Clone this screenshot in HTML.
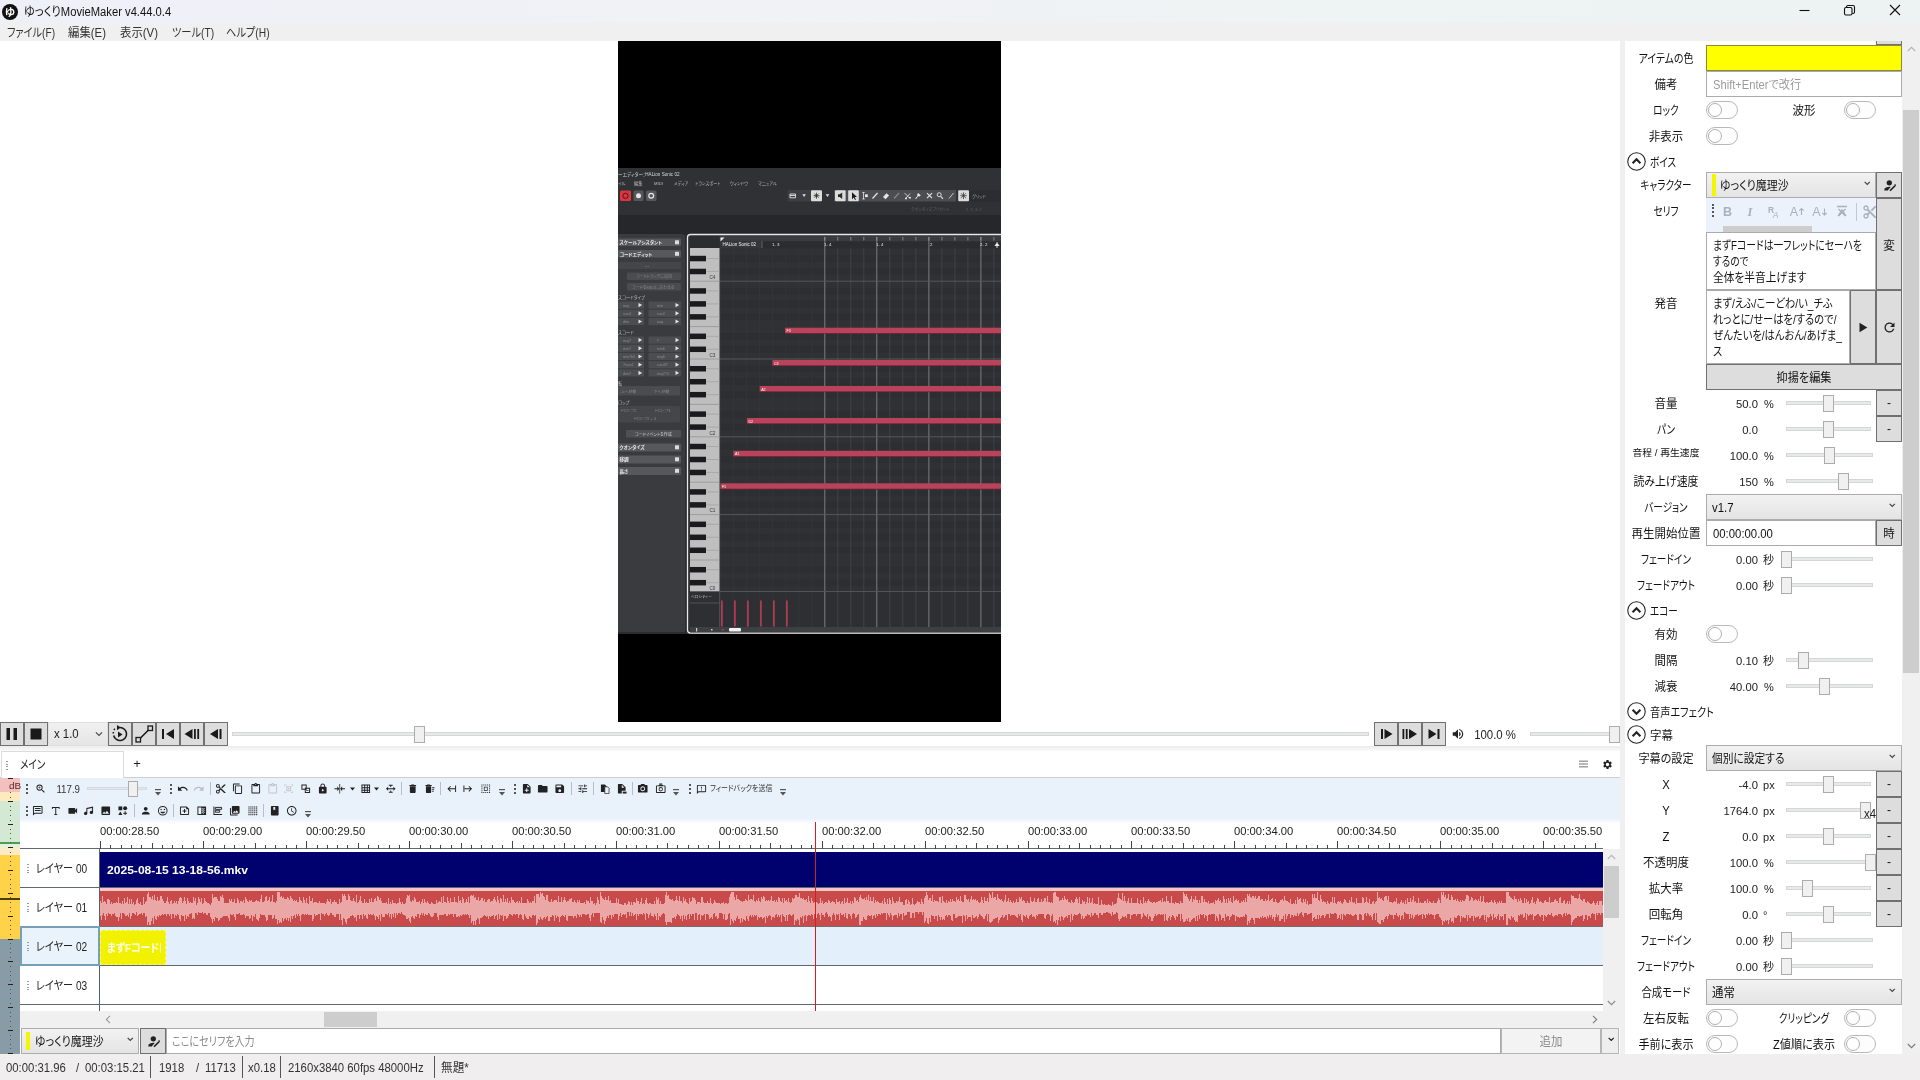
<!DOCTYPE html>
<html lang="ja"><head><meta charset="utf-8"><title>ゆっくりMovieMaker v4.44.0.4</title>
<style>
html,body{margin:0;padding:0}
body{width:1920px;height:1080px;overflow:hidden;position:relative;background:#fff;
font-family:"Liberation Sans","Noto Sans CJK JP",sans-serif;font-size:12px;color:#000;font-feature-settings:"palt"}
div,span.t,svg.i,svg.a{position:absolute;box-sizing:border-box}
span.t{white-space:nowrap;display:block}
.btn{background:#ddd;border:1px solid #707070}
.cmb{background:linear-gradient(#f2f2f2,#e4e4e4);border:1px solid #acacac}
.tb{background:#fff;border:1px solid #ababab}
.trk{background:#e7eaea;border:1px solid #d6d6d6;height:4px}
.thm{background:#f0f0f0;border:1px solid #acacac}
.tg{border:1px solid #b8b8b8;border-radius:9px;background:#fdfdfd}
.tg i{position:absolute;left:1px;top:1px;width:14px;height:14px;border-radius:50%;border:1px solid #b0b0b0;background:#fff;box-sizing:border-box}
</style></head><body><div id="root" style="left:0;top:0;width:1920px;height:1080px;will-change:transform">

<div style="left:0px;top:0px;width:1920px;height:23px;background:linear-gradient(90deg,#eef0f8 0%,#f1f2f6 35%,#eef3f3 70%,#edf2f3 100%);"></div>
<div style="left:0px;top:23px;width:1920px;height:18px;background:#f0f0f0;"></div>
<div style="left:2px;top:3.500px;width:16px;height:16px;border-radius:50%;background:#111"></div>
<span class="t" style="top:3.5px;font-size:10.5px;line-height:16px;color:#fff;font-weight:bold;left:-140px;width:300px;text-align:center;transform-origin:50% 50%;transform:scaleX(1.000);">ゆ</span>
<span class="t" style="top:3.5px;font-size:12px;line-height:16px;color:#111;left:24px;transform-origin:0 50%;transform:scaleX(0.935);">ゆっくりMovieMaker v4.44.0.4</span>
<span class="t" style="top:24.5px;font-size:12px;line-height:16px;color:#333;left:7px;transform-origin:0 50%;transform:scaleX(0.844);">ファイル(F)</span>
<span class="t" style="top:24.5px;font-size:12px;line-height:16px;color:#333;left:68px;transform-origin:0 50%;transform:scaleX(0.948);">編集(E)</span>
<span class="t" style="top:24.5px;font-size:12px;line-height:16px;color:#333;left:120px;transform-origin:0 50%;transform:scaleX(0.948);">表示(V)</span>
<span class="t" style="top:24.5px;font-size:12px;line-height:16px;color:#333;left:172px;transform-origin:0 50%;transform:scaleX(0.853);">ツール(T)</span>
<span class="t" style="top:24.5px;font-size:12px;line-height:16px;color:#333;left:226px;transform-origin:0 50%;transform:scaleX(0.853);">ヘルプ(H)</span>
<svg class="a" style="left:1790px;top:0" width="130" height="23" viewBox="0 0 130 23" fill="none" stroke="#111" stroke-width="1.1"><path d="M9.500 10.500h10"/><rect x="54.500" y="7.500" width="7.500" height="7.500" rx="1.500"/><path d="M56.500 7.500v-.5a1.500 1.500 0 0 1 1.500-1.500h5a1.500 1.500 0 0 1 1.500 1.500v5a1.500 1.500 0 0 1-1.500 1.500h-.7"/><path d="M100 5l10 10M110 5l-10 10"/></svg>
<svg class="a" style="left:618px;top:41px" width="383" height="681" viewBox="618 41 383 681" font-family="Liberation Sans,Noto Sans CJK JP,sans-serif"><rect x="618" y="41" width="383" height="681" fill="#000"/><rect x="618" y="168" width="383" height="466" fill="#2a2c30"/><rect x="618" y="168" width="383" height="47" fill="#2f3135"/><rect x="618" y="215" width="383" height="19" fill="#25272a"/><text x="618" y="176" font-size="4.600" fill="#d8d8d8">ーエディター：HALion Sonic 02</text><text x="618" y="184.500" font-size="4.200" fill="#bdbdbd">イル</text><text x="634" y="184.500" font-size="4.200" fill="#bdbdbd">編集</text><text x="654" y="184.500" font-size="4.200" fill="#bdbdbd">MIDI</text><text x="674" y="184.500" font-size="4.200" fill="#bdbdbd">メディア</text><text x="695" y="184.500" font-size="4.200" fill="#bdbdbd">トランスポート</text><text x="730" y="184.500" font-size="4.200" fill="#bdbdbd">ウィンドウ</text><text x="758" y="184.500" font-size="4.200" fill="#bdbdbd">マニュアル</text><rect x="620" y="190.500" width="11" height="10.500" rx="1.500" fill="#d8373f"/><circle cx="625.500" cy="195.800" r="2.600" fill="none" stroke="#5a1015" stroke-width="1"/><rect x="633.500" y="190.500" width="10" height="10.500" rx="1.500" fill="#55575b"/><circle cx="638.500" cy="195.800" r="2.500" fill="#e6e6e6"/><rect x="646" y="190.500" width="10.500" height="10.500" rx="1.500" fill="#55575b"/><circle cx="651.200" cy="195.800" r="2.400" fill="none" stroke="#e6e6e6" stroke-width="1.200"/><rect x="787.500" y="190" width="34.500" height="11.500" rx="1" fill="#3c3e42"/><rect x="834" y="190" width="122" height="11.500" fill="#4b4d51"/><rect x="811" y="190.200" width="11" height="11" rx="1" fill="#dcdcdc"/><rect x="835" y="190.200" width="10.6" height="11" rx="1" fill="#dcdcdc"/><rect x="848.2" y="190.200" width="10.6" height="11" rx="1" fill="#dcdcdc"/><rect x="958.2" y="190.200" width="10.8" height="11" rx="1" fill="#dcdcdc"/><path d="M802.300 194.300h3.600l-1.800 2.800zM825.700 194.300h3.600l-1.800 2.800z" fill="#e0e0e0"/><path d="M790 194h5.500v3.800H790zM790 195.500h5.500" fill="none" stroke="#e4e4e4" stroke-width=".9"/><path d="M813.500 195.700h6M816.500 192.700v6M814.500 193.700l4 4M818.500 193.700l-4 4" stroke="#2a2a2a" stroke-width=".8"/><path d="M838 194.300h1.800l2.400-1.800v6.400l-2.400-1.800H838z" fill="#2a2a2a"/><path d="M852 192.300v7l1.800-1.700 1.200 2.300.9-.5-1.200-2.300h2.300z" fill="#1a1a1a"/><path d="M862.300 192.500h2.400M863.500 192.500v6.500M862.300 199h2.400" stroke="#e6e6e6" stroke-width=".8" fill="none"/><rect x="865" y="194.300" width="2.800" height="2.800" fill="#e6e6e6"/><path d="M872.500 198.500l5-5.500" stroke="#e6e6e6" stroke-width="1.200"/><path d="M883 197l3.500-3.800 2.600 2.300-3.500 3.800z" fill="#e6e6e6"/><path d="M894 198.500l5-5.500" stroke="#85878b" stroke-width="1.200"/><path d="M904.500 193l5 5M910 193.500l-4 4.500" stroke="#e6e6e6" stroke-width=".8"/><circle cx="906" cy="198.500" r="1" fill="#e6e6e6"/><circle cx="910" cy="197.800" r="1" fill="#e6e6e6"/><path d="M915.500 199l3-4" stroke="#e6e6e6" stroke-width="1"/><path d="M918 193l2.800 2.300-1.800 1.400-2-1.800z" fill="#e6e6e6"/><path d="M927 193.200l5 5M932 193.200l-5 5" stroke="#e6e6e6" stroke-width="1.100"/><circle cx="939.200" cy="194.700" r="2" fill="none" stroke="#e6e6e6" stroke-width=".9"/><path d="M940.600 196.300l2.400 2.600" stroke="#e6e6e6" stroke-width="1.100"/><path d="M949 198.500l4.500-5.500" stroke="#e6e6e6" stroke-width=".8"/><path d="M961 193.200l5 5M966 193.200l-5 5M963.500 192.300v6.800M960.200 195.700h6.600" stroke="#2a2a2a" stroke-width=".7"/><rect x="970" y="190.500" width="31" height="11" fill="#2b2d30"/><text x="972" y="198" font-size="4.200" fill="#9a9a9a">グリッド</text><text x="911" y="210.500" font-size="4" fill="#5c5e62">クオンタイズプリセット</text><text x="966" y="210.500" font-size="4" fill="#5c5e62">2. 3. 3.   0</text><path d="M618 234h63a4 4 0 0 1 4 4v394h-67z" fill="#393b3f"/><path d="M618 634v-2h67v2z" fill="#2a2c30"/><rect x="618" y="238.5" width="63" height="7.5" rx="1" fill="#56585c"/><text x="619.500" y="244.1" font-size="4.600" fill="#e8e8e8" font-weight="bold">スケールアシスタント</text><rect x="675" y="240.3" width="4" height="4" fill="#dcdcdc"/><rect x="618" y="250" width="63" height="7.5" rx="1" fill="#56585c"/><text x="619.500" y="255.6" font-size="4.600" fill="#e8e8e8" font-weight="bold">コードエディット</text><rect x="675" y="251.8" width="4" height="4" fill="#dcdcdc"/><rect x="618" y="262" width="63" height="7" fill="#44464a"/><text x="645" y="267" font-size="4" fill="#888">---</text><rect x="627" y="272.500" width="54" height="7.500" rx="1" fill="#4a4c50"/><text x="636" y="278" font-size="4" fill="#85878b">コードトラックに追加</text><rect x="627" y="283" width="54" height="7.500" rx="1" fill="#4a4c50"/><text x="632" y="288.500" font-size="4" fill="#85878b">コードをMIDIに合わせる</text><text x="618" y="299" font-size="4.300" fill="#b8b8b8">スコードタイプ</text><rect x="618" y="301.5" width="26" height="7.200" fill="#4b4d51"/><text x="623.0" y="306.8" font-size="3.800" fill="#8a8c90">maj</text><path d="M638.5 303.0v4.200l3.600-2.100z" fill="#e4e4e4"/><rect x="648.5" y="301.5" width="32.5" height="7.200" fill="#4b4d51"/><text x="656.75" y="306.8" font-size="3.800" fill="#8a8c90">min</text><path d="M675.5 303.0v4.200l3.600-2.100z" fill="#e4e4e4"/><rect x="618" y="309.7" width="26" height="7.200" fill="#4b4d51"/><text x="623.0" y="315.0" font-size="3.800" fill="#8a8c90">sus4</text><path d="M638.5 311.2v4.200l3.600-2.100z" fill="#e4e4e4"/><rect x="648.5" y="309.7" width="32.5" height="7.200" fill="#4b4d51"/><text x="656.75" y="315.0" font-size="3.800" fill="#8a8c90">sus2</text><path d="M675.5 311.2v4.200l3.600-2.100z" fill="#e4e4e4"/><rect x="618" y="317.9" width="26" height="7.200" fill="#4b4d51"/><text x="623.0" y="323.2" font-size="3.800" fill="#8a8c90">dim</text><path d="M638.5 319.4v4.200l3.600-2.100z" fill="#e4e4e4"/><rect x="648.5" y="317.9" width="32.5" height="7.200" fill="#4b4d51"/><text x="656.75" y="323.2" font-size="3.800" fill="#8a8c90">aug</text><path d="M675.5 319.4v4.200l3.600-2.100z" fill="#e4e4e4"/><text x="618" y="334" font-size="4.300" fill="#b8b8b8">スコード</text><rect x="618" y="336.5" width="26" height="7.200" fill="#4b4d51"/><text x="623.0" y="341.8" font-size="3.800" fill="#8a8c90">maj7</text><path d="M638.5 338.0v4.200l3.600-2.100z" fill="#e4e4e4"/><rect x="648.5" y="336.5" width="32.5" height="7.200" fill="#4b4d51"/><text x="656.75" y="341.8" font-size="3.800" fill="#8a8c90">7</text><path d="M675.5 338.0v4.200l3.600-2.100z" fill="#e4e4e4"/><rect x="618" y="344.7" width="26" height="7.200" fill="#4b4d51"/><text x="623.0" y="350.0" font-size="3.800" fill="#8a8c90">min7</text><path d="M638.5 346.2v4.200l3.600-2.100z" fill="#e4e4e4"/><rect x="648.5" y="344.7" width="32.5" height="7.200" fill="#4b4d51"/><text x="656.75" y="350.0" font-size="3.800" fill="#8a8c90">min6</text><path d="M675.5 346.2v4.200l3.600-2.100z" fill="#e4e4e4"/><rect x="618" y="352.9" width="26" height="7.200" fill="#4b4d51"/><text x="623.0" y="358.2" font-size="3.800" fill="#8a8c90">min7b5</text><path d="M638.5 354.4v4.200l3.600-2.100z" fill="#e4e4e4"/><rect x="648.5" y="352.9" width="32.5" height="7.200" fill="#4b4d51"/><text x="656.75" y="358.2" font-size="3.800" fill="#8a8c90">maj6</text><path d="M675.5 354.4v4.200l3.600-2.100z" fill="#e4e4e4"/><rect x="618" y="361.1" width="26" height="7.200" fill="#4b4d51"/><text x="623.0" y="366.40000000000003" font-size="3.800" fill="#8a8c90">7sus4</text><path d="M638.5 362.6v4.200l3.600-2.100z" fill="#e4e4e4"/><rect x="648.5" y="361.1" width="32.5" height="7.200" fill="#4b4d51"/><text x="656.75" y="366.40000000000003" font-size="3.800" fill="#8a8c90">sus4/7</text><path d="M675.5 362.6v4.200l3.600-2.100z" fill="#e4e4e4"/><rect x="618" y="369.3" width="26" height="7.200" fill="#4b4d51"/><text x="623.0" y="374.6" font-size="3.800" fill="#8a8c90">dim7</text><path d="M638.5 370.8v4.200l3.600-2.100z" fill="#e4e4e4"/><rect x="648.5" y="369.3" width="32.5" height="7.200" fill="#4b4d51"/><text x="656.75" y="374.6" font-size="3.800" fill="#8a8c90">maj7#5</text><path d="M675.5 370.8v4.200l3.600-2.100z" fill="#e4e4e4"/><text x="618" y="384.500" font-size="4.300" fill="#b8b8b8">転</text><rect x="618" y="386" width="62" height="9.500" rx="1" fill="#4a4c50"/><text x="621" y="392.500" font-size="3.800" fill="#888">上へ移動</text><text x="654" y="392.500" font-size="3.800" fill="#888">下へ移動</text><text x="618" y="403.500" font-size="4.300" fill="#b8b8b8">ロップ</text><rect x="618" y="406" width="62" height="16.500" rx="1.500" fill="#44464a"/><text x="621" y="412" font-size="3.800" fill="#888">ドロップ2</text><text x="655" y="412" font-size="3.800" fill="#888">ドロップ3</text><text x="634" y="420" font-size="3.800" fill="#888">ドロップ2 + 4</text><rect x="626" y="430" width="55" height="7.500" rx="1" fill="#4e5054"/><text x="635" y="435.500" font-size="4" fill="#d0d0d0">コードイベントを作成</text><rect x="618" y="443.5" width="63" height="8" rx="1" fill="#56585c"/><text x="619.500" y="449.1" font-size="4.600" fill="#e8e8e8" font-weight="bold">クオンタイズ</text><rect x="675" y="445.3" width="4" height="4" fill="#dcdcdc"/><rect x="618" y="455.5" width="63" height="8" rx="1" fill="#56585c"/><text x="619.500" y="461.1" font-size="4.600" fill="#e8e8e8" font-weight="bold">移調</text><rect x="675" y="457.3" width="4" height="4" fill="#dcdcdc"/><rect x="618" y="467" width="63" height="8" rx="1" fill="#56585c"/><text x="619.500" y="472.6" font-size="4.600" fill="#e8e8e8" font-weight="bold">長さ</text><rect x="675" y="468.8" width="4" height="4" fill="#dcdcdc"/><rect x="687.500" y="234.500" width="320" height="398.500" rx="3" fill="#2f3135" stroke="#e8e8e8" stroke-width="1.300"/><rect x="690" y="236" width="311" height="5.500" fill="#393b3f"/><rect x="720" y="241.500" width="281" height="7" fill="#2a2c30"/><rect x="720" y="241.500" width="41.500" height="7" fill="#34363a"/><rect x="720" y="248.500" width="281" height="343" fill="#2f3135"/><rect x="720" y="579.43" width="281" height="6.483" fill="#2c2e32"/><rect x="720" y="566.47" width="281" height="6.483" fill="#2c2e32"/><rect x="720" y="547.02" width="281" height="6.483" fill="#2c2e32"/><rect x="720" y="534.05" width="281" height="6.483" fill="#2c2e32"/><rect x="720" y="521.09" width="281" height="6.483" fill="#2c2e32"/><rect x="720" y="501.64" width="281" height="6.483" fill="#2c2e32"/><rect x="720" y="488.67" width="281" height="6.483" fill="#2c2e32"/><rect x="720" y="469.22" width="281" height="6.483" fill="#2c2e32"/><rect x="720" y="456.26" width="281" height="6.483" fill="#2c2e32"/><rect x="720" y="443.29" width="281" height="6.483" fill="#2c2e32"/><rect x="720" y="423.84" width="281" height="6.483" fill="#2c2e32"/><rect x="720" y="410.88" width="281" height="6.483" fill="#2c2e32"/><rect x="720" y="391.43" width="281" height="6.483" fill="#2c2e32"/><rect x="720" y="378.46" width="281" height="6.483" fill="#2c2e32"/><rect x="720" y="365.50" width="281" height="6.483" fill="#2c2e32"/><rect x="720" y="346.05" width="281" height="6.483" fill="#2c2e32"/><rect x="720" y="333.08" width="281" height="6.483" fill="#2c2e32"/><rect x="720" y="313.63" width="281" height="6.483" fill="#2c2e32"/><rect x="720" y="300.67" width="281" height="6.483" fill="#2c2e32"/><rect x="720" y="287.70" width="281" height="6.483" fill="#2c2e32"/><rect x="720" y="268.25" width="281" height="6.483" fill="#2c2e32"/><rect x="720" y="255.28" width="281" height="6.483" fill="#2c2e32"/><path d="M720.7 248.500V627" stroke="#36383c" stroke-width=".7"/><path d="M733.7 248.500V627" stroke="#36383c" stroke-width=".7"/><path d="M746.7 248.500V627" stroke="#36383c" stroke-width=".7"/><path d="M759.7 248.500V627" stroke="#36383c" stroke-width=".7"/><path d="M772.7 248.500V627" stroke="#36383c" stroke-width=".7"/><path d="M785.8 248.500V627" stroke="#36383c" stroke-width=".7"/><path d="M798.8 248.500V627" stroke="#36383c" stroke-width=".7"/><path d="M811.8 248.500V627" stroke="#36383c" stroke-width=".7"/><path d="M824.8 237V627" stroke="#85878b" stroke-width=".9"/><path d="M837.8 248.500V627" stroke="#484a4e" stroke-width=".7"/><path d="M850.8 248.500V627" stroke="#484a4e" stroke-width=".7"/><path d="M863.8 248.500V627" stroke="#484a4e" stroke-width=".7"/><path d="M876.8 237V627" stroke="#85878b" stroke-width=".9"/><path d="M889.8 248.500V627" stroke="#484a4e" stroke-width=".7"/><path d="M902.8 248.500V627" stroke="#484a4e" stroke-width=".7"/><path d="M915.9 248.500V627" stroke="#484a4e" stroke-width=".7"/><path d="M928.9 237V627" stroke="#85878b" stroke-width=".9"/><path d="M941.9 248.500V627" stroke="#484a4e" stroke-width=".7"/><path d="M954.9 248.500V627" stroke="#484a4e" stroke-width=".7"/><path d="M967.9 248.500V627" stroke="#484a4e" stroke-width=".7"/><path d="M980.9 237V627" stroke="#85878b" stroke-width=".9"/><path d="M993.9 248.500V627" stroke="#484a4e" stroke-width=".7"/><path d="M824.8 237v3.500" stroke="#a8a8a8" stroke-width=".7"/><path d="M837.8 237v3.500" stroke="#a8a8a8" stroke-width=".7"/><path d="M850.8 237v3.500" stroke="#a8a8a8" stroke-width=".7"/><path d="M863.8 237v3.500" stroke="#a8a8a8" stroke-width=".7"/><path d="M876.8 237v3.500" stroke="#a8a8a8" stroke-width=".7"/><path d="M889.8 237v3.500" stroke="#a8a8a8" stroke-width=".7"/><path d="M902.8 237v3.500" stroke="#a8a8a8" stroke-width=".7"/><path d="M915.9 237v3.500" stroke="#a8a8a8" stroke-width=".7"/><path d="M928.9 237v3.500" stroke="#a8a8a8" stroke-width=".7"/><path d="M941.9 237v3.500" stroke="#a8a8a8" stroke-width=".7"/><path d="M954.9 237v3.500" stroke="#a8a8a8" stroke-width=".7"/><path d="M967.9 237v3.500" stroke="#a8a8a8" stroke-width=".7"/><path d="M980.9 237v3.500" stroke="#a8a8a8" stroke-width=".7"/><path d="M993.9 237v3.500" stroke="#a8a8a8" stroke-width=".7"/><path d="M720.500 237.500h4l-4 4z" fill="#f0f0f0"/><text x="722.500" y="246" font-size="4.500" fill="#f4f4f4">HALion Sonic 02</text><path d="M762 241v7" stroke="#888" stroke-width=".6"/><text x="772" y="246" font-size="4.400" fill="#e6e6e6">1. 3</text><text x="824" y="246" font-size="4.400" fill="#e6e6e6">1. 4</text><text x="876" y="246" font-size="4.400" fill="#e6e6e6">1. 4</text><text x="930" y="246" font-size="4.400" fill="#e6e6e6">2</text><text x="980" y="246" font-size="4.400" fill="#e6e6e6">2. 2</text><path d="M995 245.500l2-2 2 2zM997 242v6" stroke="#fff" fill="#fff" stroke-width=".8"/><path d="M720 514.6H1001" stroke="#5a5c60" stroke-width=".9"/><path d="M720 436.8H1001" stroke="#5a5c60" stroke-width=".9"/><path d="M720 359.0H1001" stroke="#5a5c60" stroke-width=".9"/><path d="M720 281.2H1001" stroke="#5a5c60" stroke-width=".9"/><rect x="690" y="248" width="29.500" height="344.400" fill="#bfbfbf"/><rect x="690" y="236" width="29.500" height="12" fill="#2a2c30"/><path d="M690 592.40h29.500" stroke="#8f8f8f" stroke-width=".7"/><rect x="690" y="579.93" width="16" height="5.5" fill="#1b1b1d"/><path d="M706 582.68h13.500" stroke="#9a9a9a" stroke-width=".6"/><rect x="690" y="566.97" width="16" height="5.5" fill="#1b1b1d"/><path d="M706 569.71h13.500" stroke="#9a9a9a" stroke-width=".6"/><path d="M690 559.99h29.500" stroke="#8f8f8f" stroke-width=".7"/><rect x="690" y="547.52" width="16" height="5.5" fill="#1b1b1d"/><path d="M706 550.26h13.500" stroke="#9a9a9a" stroke-width=".6"/><rect x="690" y="534.55" width="16" height="5.5" fill="#1b1b1d"/><path d="M706 537.29h13.500" stroke="#9a9a9a" stroke-width=".6"/><rect x="690" y="521.59" width="16" height="5.5" fill="#1b1b1d"/><path d="M706 524.33h13.500" stroke="#9a9a9a" stroke-width=".6"/><path d="M690 514.60h29.500" stroke="#8f8f8f" stroke-width=".7"/><rect x="690" y="502.14" width="16" height="5.5" fill="#1b1b1d"/><path d="M706 504.88h13.500" stroke="#9a9a9a" stroke-width=".6"/><rect x="690" y="489.17" width="16" height="5.5" fill="#1b1b1d"/><path d="M706 491.91h13.500" stroke="#9a9a9a" stroke-width=".6"/><path d="M690 482.19h29.500" stroke="#8f8f8f" stroke-width=".7"/><rect x="690" y="469.72" width="16" height="5.5" fill="#1b1b1d"/><path d="M706 472.46h13.500" stroke="#9a9a9a" stroke-width=".6"/><rect x="690" y="456.76" width="16" height="5.5" fill="#1b1b1d"/><path d="M706 459.50h13.500" stroke="#9a9a9a" stroke-width=".6"/><rect x="690" y="443.79" width="16" height="5.5" fill="#1b1b1d"/><path d="M706 446.53h13.500" stroke="#9a9a9a" stroke-width=".6"/><path d="M690 436.81h29.500" stroke="#8f8f8f" stroke-width=".7"/><rect x="690" y="424.34" width="16" height="5.5" fill="#1b1b1d"/><path d="M706 427.08h13.500" stroke="#9a9a9a" stroke-width=".6"/><rect x="690" y="411.38" width="16" height="5.5" fill="#1b1b1d"/><path d="M706 414.12h13.500" stroke="#9a9a9a" stroke-width=".6"/><path d="M690 404.39h29.500" stroke="#8f8f8f" stroke-width=".7"/><rect x="690" y="391.93" width="16" height="5.5" fill="#1b1b1d"/><path d="M706 394.67h13.500" stroke="#9a9a9a" stroke-width=".6"/><rect x="690" y="378.96" width="16" height="5.5" fill="#1b1b1d"/><path d="M706 381.70h13.500" stroke="#9a9a9a" stroke-width=".6"/><rect x="690" y="365.99" width="16" height="5.5" fill="#1b1b1d"/><path d="M706 368.74h13.500" stroke="#9a9a9a" stroke-width=".6"/><path d="M690 359.01h29.500" stroke="#8f8f8f" stroke-width=".7"/><rect x="690" y="346.55" width="16" height="5.5" fill="#1b1b1d"/><path d="M706 349.29h13.500" stroke="#9a9a9a" stroke-width=".6"/><rect x="690" y="333.58" width="16" height="5.5" fill="#1b1b1d"/><path d="M706 336.32h13.500" stroke="#9a9a9a" stroke-width=".6"/><path d="M690 326.60h29.500" stroke="#8f8f8f" stroke-width=".7"/><rect x="690" y="314.13" width="16" height="5.5" fill="#1b1b1d"/><path d="M706 316.87h13.500" stroke="#9a9a9a" stroke-width=".6"/><rect x="690" y="301.16" width="16" height="5.5" fill="#1b1b1d"/><path d="M706 303.91h13.500" stroke="#9a9a9a" stroke-width=".6"/><rect x="690" y="288.20" width="16" height="5.5" fill="#1b1b1d"/><path d="M706 290.94h13.500" stroke="#9a9a9a" stroke-width=".6"/><path d="M690 281.22h29.500" stroke="#8f8f8f" stroke-width=".7"/><rect x="690" y="268.75" width="16" height="5.5" fill="#1b1b1d"/><path d="M706 271.49h13.500" stroke="#9a9a9a" stroke-width=".6"/><rect x="690" y="255.78" width="16" height="5.5" fill="#1b1b1d"/><path d="M706 258.53h13.500" stroke="#9a9a9a" stroke-width=".6"/><text x="709.500" y="590.1" font-size="4.600" fill="#3a3a3a">C0</text><text x="709.500" y="512.3" font-size="4.600" fill="#3a3a3a">C1</text><text x="709.500" y="434.5" font-size="4.600" fill="#3a3a3a">C2</text><text x="709.500" y="356.7" font-size="4.600" fill="#3a3a3a">C3</text><text x="709.500" y="278.9" font-size="4.600" fill="#3a3a3a">C4</text><rect x="785" y="327.7" width="216.0" height="5.800" fill="#b8435a"/><path d="M785 333.5H1001" stroke="#6a2030" stroke-width=".7"/><text x="786.5" y="332.3" font-size="3.600" fill="#fff">F3</text><rect x="772.5" y="360" width="228.5" height="5.800" fill="#b8435a"/><path d="M772.5 365.8H1001" stroke="#6a2030" stroke-width=".7"/><text x="774.0" y="364.6" font-size="3.600" fill="#fff">C3</text><rect x="759.7" y="386" width="241.3" height="5.800" fill="#b8435a"/><path d="M759.7 391.8H1001" stroke="#6a2030" stroke-width=".7"/><text x="761.2" y="390.6" font-size="3.600" fill="#fff">A2</text><rect x="747" y="418" width="254.0" height="5.800" fill="#b8435a"/><path d="M747 423.8H1001" stroke="#6a2030" stroke-width=".7"/><text x="748.5" y="422.6" font-size="3.600" fill="#fff">D2</text><rect x="733.4" y="450.8" width="267.6" height="5.800" fill="#b8435a"/><path d="M733.4 456.6H1001" stroke="#6a2030" stroke-width=".7"/><text x="734.9" y="455.40000000000003" font-size="3.600" fill="#fff">A1</text><rect x="720.4" y="483.3" width="280.6" height="5.800" fill="#b8435a"/><path d="M720.4 489.1H1001" stroke="#6a2030" stroke-width=".7"/><text x="721.9" y="487.90000000000003" font-size="3.600" fill="#fff">F1</text><rect x="690" y="591.500" width="311" height="35.500" fill="#2d2f33"/><path d="M690 591.500H1001M690 603h29.500M719.700 591.500V627" stroke="#5a5c60" stroke-width=".8"/><text x="691" y="597.500" font-size="3.800" fill="#c8c8c8">ベロシティー</text><path d="M720.7 592V627" stroke="#36383c" stroke-width=".7"/><path d="M733.7 592V627" stroke="#36383c" stroke-width=".7"/><path d="M746.7 592V627" stroke="#36383c" stroke-width=".7"/><path d="M759.7 592V627" stroke="#36383c" stroke-width=".7"/><path d="M772.7 592V627" stroke="#36383c" stroke-width=".7"/><path d="M785.8 592V627" stroke="#36383c" stroke-width=".7"/><path d="M798.8 592V627" stroke="#36383c" stroke-width=".7"/><path d="M811.8 592V627" stroke="#36383c" stroke-width=".7"/><path d="M824.8 592V627" stroke="#85878b" stroke-width=".9"/><path d="M837.8 592V627" stroke="#484a4e" stroke-width=".7"/><path d="M850.8 592V627" stroke="#484a4e" stroke-width=".7"/><path d="M863.8 592V627" stroke="#484a4e" stroke-width=".7"/><path d="M876.8 592V627" stroke="#85878b" stroke-width=".9"/><path d="M889.8 592V627" stroke="#484a4e" stroke-width=".7"/><path d="M902.8 592V627" stroke="#484a4e" stroke-width=".7"/><path d="M915.9 592V627" stroke="#484a4e" stroke-width=".7"/><path d="M928.9 592V627" stroke="#85878b" stroke-width=".9"/><path d="M941.9 592V627" stroke="#484a4e" stroke-width=".7"/><path d="M954.9 592V627" stroke="#484a4e" stroke-width=".7"/><path d="M967.9 592V627" stroke="#484a4e" stroke-width=".7"/><path d="M980.9 592V627" stroke="#85878b" stroke-width=".9"/><path d="M993.9 592V627" stroke="#484a4e" stroke-width=".7"/><rect x="721" y="600.500" width="1.800" height="26" fill="#ad3b52"/><rect x="734" y="600.500" width="1.800" height="26" fill="#ad3b52"/><rect x="747" y="600.500" width="1.800" height="26" fill="#ad3b52"/><rect x="760" y="600.500" width="1.800" height="26" fill="#ad3b52"/><rect x="773" y="600.500" width="1.800" height="26" fill="#ad3b52"/><rect x="786" y="600.500" width="1.800" height="26" fill="#ad3b52"/><rect x="690" y="627" width="311" height="5.500" fill="#3d3f43"/><rect x="729" y="628" width="12" height="3.500" rx="1" fill="#f2f2f2"/><rect x="696" y="628" width="1.200" height="3.500" fill="#ccc"/><rect x="711" y="629" width="1.500" height="1.500" fill="#ccc"/><rect x="722" y="629" width="1.500" height="1.500" fill="#b8435a"/><rect x="618" y="634" width="383" height="88" fill="#000"/></svg>
<div style="left:0px;top:746px;width:1620px;height:5px;background:linear-gradient(#ececec,#fafafa);"></div>
<div class="btn" style="left:0px;top:722px;width:24px;height:24px;"></div>
<div class="btn" style="left:24px;top:722px;width:24px;height:24px;"></div>
<div class="btn" style="left:108px;top:722px;width:24px;height:24px;"></div>
<div class="btn" style="left:132px;top:722px;width:24px;height:24px;"></div>
<div class="btn" style="left:156px;top:722px;width:24px;height:24px;"></div>
<div class="btn" style="left:180px;top:722px;width:24px;height:24px;"></div>
<div class="btn" style="left:204px;top:722px;width:24px;height:24px;"></div>
<div style="left:48px;top:722px;width:60px;height:24px;background:linear-gradient(#f0f0f0,#e5e5e5);border:1px solid #e0e0e0;"></div>
<span class="t" style="top:726.0px;font-size:12px;line-height:16px;color:#222;left:54px;transform-origin:0 50%;transform:scaleX(0.950);">x 1.0</span>
<svg class="a" style="left:94.750px;top:730.700px" width="8" height="6.200" viewBox="0 0 9 7" fill="none" stroke="#444" stroke-width="1.200"><path d="M1 1.500l3.500 3.500L8 1.500"/></svg>
<svg class="a" style="left:0;top:722px" width="230" height="24" viewBox="0 0 230 24" fill="#1a1a1a"><rect x="6.500" y="6" width="3.500" height="12"/><rect x="13.500" y="6" width="3.500" height="12"/><rect x="30.500" y="6.500" width="11" height="11"/><path d="M120 5.500a6.500 6.500 0 1 1-6.300 8" fill="none" stroke="#1a1a1a" stroke-width="1.600"/><path d="M117 3l3.800 2.600-3.800 2.600z"/><path d="M118 9.500v6l4.500-3z"/><path d="M113.200 11.500l.2-1.800M114 8l1-1.500" stroke="#1a1a1a" stroke-width="1.500" fill="none" stroke-dasharray="1.500 1.500"/><path d="M138.500 18l12-12" stroke="#1a1a1a" stroke-width="1.600"/><rect x="136" y="15.500" width="4.500" height="4.500" fill="#ddd" stroke="#1a1a1a" stroke-width="1.300"/><rect x="148" y="4" width="4.500" height="4.500" fill="#ddd" stroke="#1a1a1a" stroke-width="1.300"/><rect x="162" y="7" width="2" height="10"/><path d="M174 7v10l-8-5z"/><path d="M192.500 7v10l-8-5z"/><rect x="194" y="7" width="1.800" height="10"/><rect x="197.300" y="7" width="1.800" height="10"/><path d="M218 7v10l-8-5z"/><rect x="219.500" y="7" width="2" height="10"/></svg>
<div class="trk" style="left:232px;top:732px;width:1137px;height:4px;"></div>
<div class="thm" style="left:414px;top:726px;width:11px;height:17px;"></div>
<div class="btn" style="left:1374px;top:722px;width:24px;height:24px;"></div>
<div class="btn" style="left:1398px;top:722px;width:24px;height:24px;"></div>
<div class="btn" style="left:1422px;top:722px;width:24px;height:24px;"></div>
<svg class="a" style="left:1374px;top:722px" width="72" height="24" viewBox="0 0 72 24" fill="#1a1a1a"><rect x="7" y="7" width="2" height="10"/><path d="M10.500 7v10l8-5z"/><rect x="28.500" y="7" width="1.800" height="10"/><rect x="31.800" y="7" width="1.800" height="10"/><path d="M35 7v10l8-5z"/><path d="M54.500 7v10l8-5z"/><rect x="63.500" y="7" width="2" height="10"/></svg>
<svg class="i" style="left:1451px;top:727px" width="14" height="14" viewBox="0 0 24 24" fill="#222" ><path d="M3 9v6h4l5 5V4L7 9H3zm13.500 3c0-1.770-1.020-3.290-2.500-4.030v8.050c1.480-.73 2.500-2.250 2.500-4.020zM14 3.230v2.060c2.890.86 5 3.540 5 6.710s-2.110 5.850-5 6.710v2.060c4.010-.91 7-4.490 7-8.770s-2.990-7.860-7-8.770z"/></svg>
<span class="t" style="top:727.0px;font-size:12px;line-height:16px;color:#222;left:1216px;width:300px;text-align:right;transform-origin:100% 50%;transform:scaleX(0.950);">100.0 %</span>
<div class="trk" style="left:1530px;top:732px;width:85px;height:4px;"></div>
<div class="thm" style="left:1609px;top:726px;width:11px;height:17px;"></div>
<div style="left:0px;top:751px;width:1620px;height:27px;background:#fff;"></div>
<div style="left:0px;top:777px;width:1620px;height:1px;background:#cfcfcf;"></div>
<div style="left:1px;top:751px;width:123px;height:27px;background:#fff;border:1px solid #dcdcdc;border-bottom:0;"></div>
<div style="left:6px;top:761.0px;width:2px;height:1px;background:#9a9a9a;"></div>
<div style="left:6px;top:763.7px;width:2px;height:1px;background:#9a9a9a;"></div>
<div style="left:6px;top:766.4px;width:2px;height:1px;background:#9a9a9a;"></div>
<div style="left:6px;top:769.1px;width:2px;height:1px;background:#9a9a9a;"></div>
<span class="t" style="top:756.5px;font-size:12px;line-height:16px;color:#222;left:20px;transform-origin:0 50%;transform:scaleX(0.800);">メイン</span>
<span class="t" style="top:756.0px;font-size:13px;line-height:16px;color:#222;left:-13px;width:300px;text-align:center;transform-origin:50% 50%;transform:scaleX(1.000);">+</span>
<svg class="a" style="left:1579px;top:760px" width="9" height="8" viewBox="0 0 9 8" fill="#9a9a9a"><rect y="0.500" width="9" height="1.400"/><rect y="3.300" width="9" height="1.400"/><rect y="6.100" width="9" height="1.400"/></svg>
<svg class="i" style="left:1602px;top:758.5px" width="11" height="11" viewBox="0 0 24 24" fill="#222" ><path d="M19.14 12.94c.04-.3.06-.61.06-.94 0-.32-.02-.64-.07-.94l2.03-1.58c.18-.14.23-.41.12-.61l-1.92-3.32c-.12-.22-.37-.29-.59-.22l-2.39.96c-.5-.38-1.03-.7-1.62-.94l-.36-2.54c-.04-.24-.24-.41-.48-.41h-3.84c-.24 0-.43.17-.47.41l-.36 2.54c-.59.24-1.13.57-1.62.94l-2.39-.96c-.22-.08-.47 0-.59.22L2.74 8.87c-.12.21-.08.47.12.61l2.03 1.58c-.05.3-.09.63-.09.94s.02.64.07.94l-2.03 1.58c-.18.14-.23.41-.12.61l1.92 3.32c.12.22.37.29.59.22l2.39-.96c.5.38 1.03.7 1.62.94l.36 2.54c.05.24.24.41.48.41h3.84c.24 0 .44-.17.47-.41l.36-2.54c.59-.24 1.13-.56 1.62-.94l2.39.96c.22.08.47 0 .59-.22l1.92-3.32c.12-.22.07-.47-.12-.61l-2.01-1.58zM12 15.6c-1.98 0-3.6-1.62-3.6-3.6s1.62-3.600 3.6-3.600 3.6 1.620 3.6 3.600-1.620 3.600-3.600 3.600z"/></svg>
<div style="left:20px;top:778px;width:1600px;height:44px;background:#e9f1fb;"></div>
<div style="left:20px;top:818px;width:1600px;height:6px;background:linear-gradient(#e9f1fb,#fff);"></div>
<div style="left:26px;top:784.0px;width:2px;height:2px;background:#555;"></div>
<div style="left:26px;top:787.9px;width:2px;height:2px;background:#555;"></div>
<div style="left:26px;top:791.8px;width:2px;height:2px;background:#555;"></div>
<svg class="i" style="left:34.5px;top:783px" width="11.5" height="11.5" viewBox="0 0 24 24" fill="#222" ><path d="M15.5 14h-.79l-.28-.27A6.47 6.47 0 0 0 16 9.5 6.5 6.5 0 1 0 9.5 16c1.61 0 3.09-.59 4.23-1.57l.27.28v.79l5 4.99L20.49 19l-4.99-5zm-6 0C7.01 14 5 11.99 5 9.5S7.01 5 9.5 5 14 7.01 14 9.5 11.99 14 9.5 14z"/><path d="M12 10h-2v2H9v-2H7V9h2V7h1v2h2v1z"/></svg>
<span class="t" style="top:782.0px;font-size:10px;line-height:16px;color:#333;left:-220px;width:300px;text-align:right;transform-origin:100% 50%;transform:scaleX(0.970);">117.9</span>
<div style="left:87px;top:787px;width:60px;height:3px;background:#e3e6ea;border:1px solid #d6d9dd;"></div>
<div class="thm" style="left:128px;top:781px;width:10px;height:16px;"></div>
<svg class="a" style="left:153.5px;top:789px" width="8" height="7" viewBox="0 0 8 7" fill="#555"><rect x="1" y="0" width="6" height="1.200"/><path d="M1 3h6L4 6.500z"/></svg>
<div style="left:169.5px;top:784.0px;width:2px;height:2px;background:#555;"></div>
<div style="left:169.5px;top:787.9px;width:2px;height:2px;background:#555;"></div>
<div style="left:169.5px;top:791.8px;width:2px;height:2px;background:#555;"></div>
<svg class="i" style="left:176.75px;top:782.75px" width="11.5" height="11.5" viewBox="0 0 24 24" fill="#222" color="#222"><path d="M12.5 8c-2.65 0-5.05.99-6.9 2.6L2 7v9h9l-3.62-3.62c1.39-1.16 3.16-1.88 5.12-1.88 3.54 0 6.55 2.31 7.6 5.5l2.37-.78C21.08 11.03 17.15 8 12.5 8z"/></svg>
<svg class="i" style="left:193.25px;top:782.75px" width="11.5" height="11.5" viewBox="0 0 24 24" fill="#b9bcc2" color="#b9bcc2"><path d="M18.4 10.6C16.55 8.99 14.15 8 11.5 8c-4.65 0-8.58 3.03-9.96 7.22L3.9 16c1.05-3.19 4.05-5.5 7.6-5.5 1.95 0 3.73.72 5.12 1.88L13 16h9V7l-3.6 3.6z"/></svg>
<div style="left:210px;top:782.0px;width:1px;height:13px;background:#b9bec6;"></div>
<svg class="i" style="left:215.25px;top:782.75px" width="11.5" height="11.5" viewBox="0 0 24 24" fill="#222" color="#222"><path d="M9.64 7.64c.23-.5.36-1.05.36-1.64 0-2.21-1.79-4-4-4S2 3.79 2 6s1.79 4 4 4c.59 0 1.14-.13 1.64-.36L10 12l-2.36 2.36C7.14 14.13 6.59 14 6 14c-2.21 0-4 1.79-4 4s1.79 4 4 4 4-1.79 4-4c0-.59-.13-1.14-.36-1.64L12 14l7 7h3v-1L9.64 7.64zM6 8c-1.1 0-2-.89-2-2s.9-2 2-2 2 .89 2 2-.9 2-2 2zm0 12c-1.1 0-2-.89-2-2s.9-2 2-2 2 .89 2 2-.9 2-2 2zm6-7.5c-.28 0-.5-.22-.5-.5s.22-.5.5-.5.5.22.5.5-.22.5-.5.5zM19 3l-6 6 2 2 7-7V3z"/></svg>
<svg class="i" style="left:232.25px;top:782.75px" width="11.5" height="11.5" viewBox="0 0 24 24" fill="#222" color="#222"><path d="M16 1H4c-1.1 0-2 .9-2 2v14h2V3h12V1zm3 4H8c-1.1 0-2 .9-2 2v14c0 1.1.9 2 2 2h11c1.1 0 2-.9 2-2V7c0-1.1-.9-2-2-2zm0 16H8V7h11v14z"/></svg>
<svg class="i" style="left:249.75px;top:782.75px" width="11.5" height="11.5" viewBox="0 0 24 24" fill="#222" color="#222"><path d="M19 2h-4.18C14.4.84 13.3 0 12 0c-1.3 0-2.4.84-2.82 2H5c-1.1 0-2 .9-2 2v16c0 1.1.9 2 2 2h14c1.1 0 2-.9 2-2V4c0-1.1-.9-2-2-2zm-7 0c.55 0 1 .45 1 1s-.45 1-1 1-1-.45-1-1 .45-1 1-1zm7 18H5V4h2v3h10V4h2v16z"/></svg>
<svg class="i" style="left:266.75px;top:782.75px" width="11.5" height="11.5" viewBox="0 0 24 24" fill="#c3c6cc" color="#c3c6cc"><path d="M19 2h-4.18C14.4.84 13.3 0 12 0c-1.3 0-2.4.84-2.82 2H5c-1.1 0-2 .9-2 2v16c0 1.1.9 2 2 2h14c1.1 0 2-.9 2-2V4c0-1.1-.9-2-2-2zm-7 0c.55 0 1 .45 1 1s-.45 1-1 1-1-.45-1-1 .45-1 1-1zm7 18H5V4h2v3h10V4h2v16z"/></svg>
<svg class="i" style="left:283.25px;top:782.75px" width="11.5" height="11.5" viewBox="0 0 24 24" fill="#c3c6cc" color="#c3c6cc"><path d="M3 3h4v1.500H4.500V7H3zM17 3h4v4h-1.500V4.500H17zM3 17h1.500v2.500H7V21H3zM19.500 17H21v4h-4v-1.500h2.500z"/><path d="M7 7h10v10H7zm2 2v6h6V9z"/><rect x="10.500" y="10.500" width="3" height="3"/></svg>
<svg class="i" style="left:300.25px;top:782.75px" width="11.5" height="11.5" viewBox="0 0 24 24" fill="#222" color="#222"><path d="M3 3h11v11H3zm2 2v7h7V5z"/><path d="M10 10h11v11H10zm2 2v7h7v-7z"/><path d="M13 15h5v1.500h-5z"/></svg>
<svg class="i" style="left:317.25px;top:782.75px" width="11.5" height="11.5" viewBox="0 0 24 24" fill="#222" color="#222"><path d="M18 8h-1V6c0-2.76-2.24-5-5-5S7 3.24 7 6v2H6c-1.1 0-2 .9-2 2v10c0 1.1.9 2 2 2h12c1.1 0 2-.9 2-2V10c0-1.1-.9-2-2-2zm-6 9c-1.1 0-2-.9-2-2s.9-2 2-2 2 .9 2 2-.9 2-2 2zm3.1-9H8.9V6c0-1.71 1.39-3.1 3.1-3.1 1.71 0 3.1 1.39 3.1 3.1v2z"/></svg>
<svg class="i" style="left:334.25px;top:782.75px" width="11.5" height="11.5" viewBox="0 0 24 24" fill="#222" color="#222"><path d="M11.200 2h1.600v20h-1.600z"/><path d="M1 11h6V7l4 5-4 5v-4H1zM23 11h-6V7l-4 5 4 5v-4h6z"/></svg>
<svg class="a" style="left:349.5px;top:787.0px" width="5" height="4" viewBox="0 0 5 4" fill="#222"><path d="M0 .5h5L2.500 3.500z"/></svg>
<svg class="i" style="left:359.75px;top:782.75px" width="11.5" height="11.5" viewBox="0 0 24 24" fill="#222" color="#222"><path d="M3 3h18v18H3zm2 2v3.700h3.700V5zm5.700 0v3.700h3.600V5zm5.600 0v3.700H19V5zM5 10.700v3.600h3.700v-3.600zm5.700 0v3.600h3.600v-3.600zm5.600 0v3.600H19v-3.600zM5 16.300V19h3.700v-2.700zm5.700 0V19h3.600v-2.700zm5.600 0V19H19v-2.700z"/></svg>
<svg class="a" style="left:374.2px;top:787.0px" width="5" height="4" viewBox="0 0 5 4" fill="#222"><path d="M0 .5h5L2.500 3.500z"/></svg>
<svg class="i" style="left:384.75px;top:782.75px" width="11.5" height="11.5" viewBox="0 0 24 24" fill="#222" color="#222"><path d="M2 12l4.500-4v3h11V8l4.500 4-4.500 4v-3h-11v3z"/><path d="M8 3.500h8v2.200H8zM8 18.300h8v2.200H8zM11 5.500h2v3h-2zM11 15.500h2v3h-2z"/></svg>
<div style="left:401px;top:782.0px;width:1px;height:13px;background:#b9bec6;"></div>
<svg class="i" style="left:406.75px;top:782.75px" width="11.5" height="11.5" viewBox="0 0 24 24" fill="#222" color="#222"><path d="M6 19c0 1.1.9 2 2 2h8c1.1 0 2-.9 2-2V7H6v12zM19 4h-3.5l-1-1h-5l-1 1H5v2h14V4z"/></svg>
<svg class="i" style="left:423.75px;top:782.75px" width="11.5" height="11.5" viewBox="0 0 24 24" fill="#222" color="#222"><path d="M4 19c0 1.100.9 2 2 2h7c1.100 0 2-.9 2-2V7H4v12zM16 4h-3l-1-1H7L6 4H3v2h13V4z"/><path d="M17 9h5v2h-5zM17 13h4v2h-4zM17 17h3v2h-3z"/></svg>
<div style="left:440px;top:782.0px;width:1px;height:13px;background:#b9bec6;"></div>
<svg class="i" style="left:446.25px;top:782.75px" width="11.5" height="11.5" viewBox="0 0 24 24" fill="#222" color="#222"><path d="M19 5h2v14h-2z"/><path d="M19 11H6.800l3.600-3.600L9 6l-6 6 6 6 1.400-1.400L6.800 13H19z"/></svg>
<svg class="i" style="left:462.25px;top:782.75px" width="11.5" height="11.5" viewBox="0 0 24 24" fill="#222" color="#222"><path d="M3 5h2v14H3z"/><path d="M5 11h12.200l-3.600-3.600L15 6l6 6-6 6-1.400-1.400 3.600-3.600H5z"/></svg>
<svg class="i" style="left:479.75px;top:782.75px" width="11.5" height="11.5" viewBox="0 0 24 24" fill="#222" color="#222"><path d="M3 3h2v2H3zm4 0h2v2H7zm4 0h2v2h-2zm4 0h2v2h-2zm4 0h2v2h-2zM3 7h2v2H3zm16 0h2v2h-2zM3 11h2v2H3zm16 0h2v2h-2zM3 15h2v2H3zm16 0h2v2h-2zM3 19h2v2H3zm4 0h2v2H7zm4 0h2v2h-2zm4 0h2v2h-2zm4 0h2v2h-2z"/><path d="M8 8h8v8H8zm1.500 1.500v5h5v-5z"/></svg>
<svg class="a" style="left:497.5px;top:789px" width="8" height="7" viewBox="0 0 8 7" fill="#555"><rect x="1" y="0" width="6" height="1.200"/><path d="M1 3h6L4 6.500z"/></svg>
<div style="left:513.5px;top:784.0px;width:2px;height:2px;background:#555;"></div>
<div style="left:513.5px;top:787.9px;width:2px;height:2px;background:#555;"></div>
<div style="left:513.5px;top:791.8px;width:2px;height:2px;background:#555;"></div>
<svg class="i" style="left:520.95px;top:782.75px" width="11.5" height="11.5" viewBox="0 0 24 24" fill="#222" color="#222"><path d="M14 2H6c-1.100 0-2 .9-2 2v16c0 1.100.9 2 2 2h12c1.100 0 2-.9 2-2V8l-6-6zm2 14h-3v3h-2v-3H8v-2h3v-3h2v3h3v2zm-3-7V3.500L18.500 9H13z"/></svg>
<svg class="i" style="left:537.25px;top:782.75px" width="11.5" height="11.5" viewBox="0 0 24 24" fill="#222" color="#222"><path d="M10 4H4c-1.1 0-1.99.9-1.99 2L2 18c0 1.1.9 2 2 2h16c1.1 0 2-.9 2-2V8c0-1.1-.9-2-2-2h-8l-2-2z"/></svg>
<svg class="i" style="left:554.25px;top:782.75px" width="11.5" height="11.5" viewBox="0 0 24 24" fill="#222" color="#222"><path d="M17 3H5c-1.11 0-2 .9-2 2v14c0 1.1.89 2 2 2h14c1.1 0 2-.9 2-2V7l-4-4zm-5 16c-1.66 0-3-1.34-3-3s1.34-3 3-3 3 1.34 3 3-1.34 3-3 3zm3-10H5V5h10v4z"/></svg>
<div style="left:571px;top:782.0px;width:1px;height:13px;background:#b9bec6;"></div>
<svg class="i" style="left:576.75px;top:782.75px" width="11.5" height="11.5" viewBox="0 0 24 24" fill="#222" color="#222"><path d="M3 17v2h6v-2H3zM3 5v2h10V5H3zm10 16v-2h8v-2h-8v-2h-2v6h2zM7 9v2H3v2h4v2h2V9H7zm14 4v-2H11v2h10zm-6-4h2V7h4V5h-4V3h-2v6z"/></svg>
<div style="left:593px;top:782.0px;width:1px;height:13px;background:#b9bec6;"></div>
<svg class="i" style="left:599.25px;top:782.75px" width="11.5" height="11.5" viewBox="0 0 24 24" fill="#222" color="#222"><path d="M4 3h8l4 4v12H4z"/><path d="M12 8h6l3 3v11H12z" fill="#e9f1fb" stroke="currentColor" stroke-width="1.500"/></svg>
<svg class="i" style="left:616.25px;top:782.75px" width="11.5" height="11.5" viewBox="0 0 24 24" fill="#222" color="#222"><path d="M13 2H6c-1.100 0-2 .9-2 2v16c0 1.100.9 2 2 2h6v-6h8V9l-7-7zm-1 8V3.500L17.500 10H12z"/><path d="M14 18h8v4h-8z"/></svg>
<div style="left:632px;top:782.0px;width:1px;height:13px;background:#b9bec6;"></div>
<svg class="i" style="left:637.25px;top:782.75px" width="11.5" height="11.5" viewBox="0 0 24 24" fill="#222" color="#222"><circle cx="12" cy="12" r="3.2"/><path d="M9 2L7.17 4H4c-1.1 0-2 .9-2 2v12c0 1.1.9 2 2 2h16c1.1 0 2-.9 2-2V6c0-1.1-.9-2-2-2h-3.17L15 2H9zm3 15c-2.76 0-5-2.24-5-5s2.24-5 5-5 5 2.24 5 5-2.24 5-5 5z"/></svg>
<svg class="i" style="left:654.75px;top:782.75px" width="11.5" height="11.5" viewBox="0 0 24 24" fill="#222" color="#222"><path d="M9 1h6v2H9z"/><path d="M20 5h-3.200L15 3H9L7.200 5H4c-1.100 0-2 .9-2 2v12c0 1.100.9 2 2 2h16c1.100 0 2-.9 2-2V7c0-1.100-.9-2-2-2zm0 14H4V7h16v12z"/><path d="M12 8.500a4.500 4.500 0 1 0 0 9 4.500 4.500 0 0 0 0-9zm0 7.200a2.700 2.700 0 1 1 0-5.400 2.700 2.700 0 0 1 0 5.400z"/></svg>
<svg class="a" style="left:672px;top:789px" width="8" height="7" viewBox="0 0 8 7" fill="#555"><rect x="1" y="0" width="6" height="1.200"/><path d="M1 3h6L4 6.500z"/></svg>
<div style="left:688.5px;top:784.0px;width:2px;height:2px;background:#555;"></div>
<div style="left:688.5px;top:787.9px;width:2px;height:2px;background:#555;"></div>
<div style="left:688.5px;top:791.8px;width:2px;height:2px;background:#555;"></div>
<svg class="i" style="left:695.5px;top:783.5px" width="11" height="11" viewBox="0 0 24 24" fill="#222" ><path d="M20 2H4c-1.100 0-1.990.9-1.990 2L2 22l4-4h14c1.100 0 2-.9 2-2V4c0-1.100-.9-2-2-2zm0 14H5.170L4 17.170V4h16v12zm-9-4h2v2h-2zm0-6h2v4h-2z"/></svg>
<span class="t" style="top:780.5px;font-size:8px;line-height:16px;color:#333;left:710px;transform-origin:0 50%;transform:scaleX(0.875);">フィードバックを送信</span>
<svg class="a" style="left:779px;top:789px" width="8" height="7" viewBox="0 0 8 7" fill="#555"><rect x="1" y="0" width="6" height="1.200"/><path d="M1 3h6L4 6.500z"/></svg>
<div style="left:26px;top:806.0px;width:2px;height:2px;background:#555;"></div>
<div style="left:26px;top:809.9px;width:2px;height:2px;background:#555;"></div>
<div style="left:26px;top:813.8px;width:2px;height:2px;background:#555;"></div>
<svg class="i" style="left:32.25px;top:804.75px" width="11.5" height="11.5" viewBox="0 0 24 24" fill="#222" color="#222"><path d="M20 2H4c-1.100 0-2 .9-2 2v18l4-4h14c1.100 0 2-.9 2-2V4c0-1.100-.9-2-2-2zm0 14H5.200L4 17.200V4h16v12z"/><path d="M6 6.500h12v2H6zM6 10.500h12v2H6z"/></svg>
<svg class="i" style="left:49.75px;top:804.75px" width="11.5" height="11.5" viewBox="0 0 24 24" fill="#222" color="#222"><path d="M4 4h16v4.500h-1.500l-.8-2.500H13v13l2.500.800V21h-7v-1.200L11 19V6H6.300l-.8 2.500H4z"/></svg>
<svg class="i" style="left:66.75px;top:804.75px" width="11.5" height="11.5" viewBox="0 0 24 24" fill="#222" color="#222"><path d="M17 10.500V7c0-.55-.45-1-1-1H4c-.55 0-1 .45-1 1v10c0 .55.45 1 1 1h12c.55 0 1-.45 1-1v-3.500l4 4v-11l-4 4z"/></svg>
<svg class="i" style="left:83.25px;top:804.75px" width="11.5" height="11.5" viewBox="0 0 24 24" fill="#222" color="#222"><path d="M21 3v12.500a3.500 3.500 0 0 1-3.500 3.500 3.500 3.500 0 0 1-3.500-3.500 3.500 3.500 0 0 1 3.500-3.500c.54 0 1.050.12 1.500.34V6.470L9 8.600v8.900A3.500 3.500 0 0 1 5.500 21 3.500 3.500 0 0 1 2 17.500 3.500 3.500 0 0 1 5.500 14c.54 0 1.050.12 1.500.34V6l14-3z"/></svg>
<svg class="i" style="left:100.25px;top:804.75px" width="11.5" height="11.5" viewBox="0 0 24 24" fill="#222" color="#222"><path d="M21 19V5c0-1.100-.9-2-2-2H5c-1.100 0-2 .9-2 2v14c0 1.100.9 2 2 2h14c1.100 0 2-.9 2-2zM8.500 13.500l2.500 3.010L14.500 12l4.500 6H5l3.500-4.500z"/></svg>
<svg class="i" style="left:117.25px;top:804.75px" width="11.5" height="11.5" viewBox="0 0 24 24" fill="#222" color="#222"><path d="M3 3h8v8H3z"/><circle cx="17" cy="7" r="4.200"/><path d="M7 13.500l4.300 7.500H2.700z"/><path d="M16 13h2v3h3v2h-3v3h-2v-3h-3v-2h3z"/></svg>
<div style="left:134px;top:804.0px;width:1px;height:13px;background:#b9bec6;"></div>
<svg class="i" style="left:139.75px;top:804.75px" width="11.5" height="11.5" viewBox="0 0 24 24" fill="#222" color="#222"><path d="M12 12c2.21 0 4-1.79 4-4s-1.79-4-4-4-4 1.79-4 4 1.79 4 4 4zm0 2c-2.67 0-8 1.34-8 4v2h16v-2c0-2.660-5.330-4-8-4z"/></svg>
<svg class="i" style="left:156.75px;top:804.75px" width="11.5" height="11.5" viewBox="0 0 24 24" fill="#222" color="#222"><path d="M12 2a10 10 0 1 0 0 20 10 10 0 0 0 0-20zm0 18a8 8 0 1 1 0-16 8 8 0 0 1 0 16z"/><circle cx="8.500" cy="9.500" r="1.500"/><circle cx="15.500" cy="9.500" r="1.500"/><path d="M12 17.500c2.330 0 4.310-1.460 5.110-3.500H6.890c.8 2.040 2.780 3.500 5.110 3.500z"/></svg>
<div style="left:173px;top:804.0px;width:1px;height:13px;background:#b9bec6;"></div>
<svg class="i" style="left:178.75px;top:804.75px" width="11.5" height="11.5" viewBox="0 0 24 24" fill="#222" color="#222"><path d="M4 3h12l5 5v11c0 1.100-.9 2-2 2H4c-1.100 0-2-.9-2-2V5c0-1.100.9-2 2-2zm0 2v14h15V9h-4V5z"/><path d="M10.500 8.500h2v3h3v2h-3v3h-2v-3h-3v-2h3z"/></svg>
<svg class="i" style="left:195.75px;top:804.75px" width="11.5" height="11.5" viewBox="0 0 24 24" fill="#222" color="#222"><path d="M3 3h18v18H3zm2 2v14h6V5z"/><path d="M12 6h2v2h-2zm2 2h2v2h-2zm-2 2h2v2h-2zm2 2h2v2h-2zm-2 2h2v2h-2zm2 2h2v2h-2zM16 6h2v2h-2zm0 4h2v2h-2zm0 4h2v2h-2z" fill="#e9f1fb"/></svg>
<svg class="i" style="left:212.25px;top:804.75px" width="11.5" height="11.5" viewBox="0 0 24 24" fill="#222" color="#222"><path d="M3 3h2v16h16v2H3z"/><path d="M7 5h13v4H7zM7 11h9v4H7z" fill="none" stroke="currentColor" stroke-width="2"/></svg>
<svg class="i" style="left:229.25px;top:804.75px" width="11.5" height="11.5" viewBox="0 0 24 24" fill="#222" color="#222"><path d="M22 16V4c0-1.100-.9-2-2-2H8c-1.100 0-2 .9-2 2v12c0 1.100.9 2 2 2h12c1.100 0 2-.9 2-2zm-11-4l2.030 2.710L16 11l4 5H8l3-4zM2 6v14c0 1.100.9 2 2 2h14v-2H4V6H2z"/></svg>
<svg class="i" style="left:246.75px;top:804.75px" width="11.5" height="11.5" viewBox="0 0 24 24" fill="#222" color="#222"><rect x="3" y="3" width="2.300" height="2.300"/><rect x="3" y="7" width="2.300" height="2.300"/><rect x="3" y="11" width="2.300" height="2.300"/><rect x="3" y="15" width="2.300" height="2.300"/><rect x="3" y="19" width="2.300" height="2.300"/><rect x="7" y="3" width="2.300" height="2.300"/><rect x="7" y="7" width="2.300" height="2.300"/><rect x="7" y="11" width="2.300" height="2.300"/><rect x="7" y="15" width="2.300" height="2.300"/><rect x="7" y="19" width="2.300" height="2.300"/><rect x="11" y="3" width="2.300" height="2.300"/><rect x="11" y="7" width="2.300" height="2.300"/><rect x="11" y="11" width="2.300" height="2.300"/><rect x="11" y="15" width="2.300" height="2.300"/><rect x="11" y="19" width="2.300" height="2.300"/><rect x="15" y="3" width="2.300" height="2.300"/><rect x="15" y="7" width="2.300" height="2.300"/><rect x="15" y="11" width="2.300" height="2.300"/><rect x="15" y="15" width="2.300" height="2.300"/><rect x="15" y="19" width="2.300" height="2.300"/><rect x="19" y="3" width="2.300" height="2.300"/><rect x="19" y="7" width="2.300" height="2.300"/><rect x="19" y="11" width="2.300" height="2.300"/><rect x="19" y="15" width="2.300" height="2.300"/><rect x="19" y="19" width="2.300" height="2.300"/></svg>
<div style="left:263px;top:804.0px;width:1px;height:13px;background:#b9bec6;"></div>
<svg class="i" style="left:268.75px;top:804.75px" width="11.5" height="11.5" viewBox="0 0 24 24" fill="#222" color="#222"><path d="M18 2H6c-1.100 0-2 .9-2 2v16c0 1.100.9 2 2 2h12c1.100 0 2-.9 2-2V4c0-1.100-.9-2-2-2zM9 4h4v7l-2-1.500L9 11V4z"/></svg>
<svg class="i" style="left:285.75px;top:804.75px" width="11.5" height="11.5" viewBox="0 0 24 24" fill="#222" color="#222"><path d="M11.990 2C6.470 2 2 6.480 2 12s4.470 10 9.990 10C17.520 22 22 17.520 22 12S17.520 2 11.990 2zM12 20c-4.420 0-8-3.580-8-8s3.580-8 8-8 8 3.580 8 8-3.580 8-8 8zm.5-13H11v6l5.250 3.150.75-1.230-4.500-2.670z"/></svg>
<svg class="a" style="left:303.5px;top:811px" width="8" height="7" viewBox="0 0 8 7" fill="#555"><rect x="1" y="0" width="6" height="1.200"/><path d="M1 3h6L4 6.500z"/></svg>
<div style="left:0px;top:778px;width:20px;height:14px;background:#f4bfbf;"></div>
<div style="left:0px;top:792px;width:20px;height:9px;background:#fdeabf;"></div>
<div style="left:0px;top:801px;width:20px;height:41px;background:#d3e9d3;"></div>
<div style="left:0px;top:842px;width:20px;height:2px;background:#4e9e4e;"></div>
<div style="left:0px;top:844px;width:20px;height:3px;background:#e2f0dc;"></div>
<div style="left:0px;top:847px;width:20px;height:8px;background:#fdebc8;"></div>
<div style="left:0px;top:855px;width:20px;height:84px;background:#ffd24a;"></div>
<div style="left:0px;top:898px;width:20px;height:2px;background:#4a3c08;"></div>
<div style="left:0px;top:939px;width:20px;height:115px;background:#879ca7;"></div>
<div style="left:8px;top:777.5px;width:5px;height:1.5px;background:#222;"></div>
<div style="left:9.5px;top:783px;width:1.5px;height:1px;background:#555;"></div>
<div style="left:9.5px;top:788px;width:1.5px;height:1px;background:#555;"></div>
<div style="left:9.5px;top:792px;width:1.5px;height:1px;background:#555;"></div>
<div style="left:9.5px;top:797px;width:1.5px;height:1px;background:#555;"></div>
<div style="left:8px;top:800.5px;width:5px;height:1.5px;background:#222;"></div>
<div style="left:9.5px;top:806px;width:1.5px;height:1px;background:#555;"></div>
<div style="left:9.5px;top:810px;width:1.5px;height:1px;background:#555;"></div>
<div style="left:9.5px;top:815px;width:1.5px;height:1px;background:#555;"></div>
<div style="left:9.5px;top:820px;width:1.5px;height:1px;background:#555;"></div>
<div style="left:8px;top:823.5px;width:5px;height:1.5px;background:#222;"></div>
<div style="left:9.5px;top:829px;width:1.5px;height:1px;background:#555;"></div>
<div style="left:9.5px;top:833px;width:1.5px;height:1px;background:#555;"></div>
<div style="left:9.5px;top:838px;width:1.5px;height:1px;background:#555;"></div>
<div style="left:9.5px;top:842px;width:1.5px;height:1px;background:#555;"></div>
<div style="left:8px;top:846.5px;width:5px;height:1.5px;background:#222;"></div>
<div style="left:9.5px;top:852px;width:1.5px;height:1px;background:#555;"></div>
<div style="left:9.5px;top:856px;width:1.5px;height:1px;background:#555;"></div>
<div style="left:9.5px;top:861px;width:1.5px;height:1px;background:#555;"></div>
<div style="left:9.5px;top:865px;width:1.5px;height:1px;background:#555;"></div>
<div style="left:8px;top:869.5px;width:5px;height:1.5px;background:#222;"></div>
<div style="left:9.5px;top:874px;width:1.5px;height:1px;background:#555;"></div>
<div style="left:9.5px;top:879px;width:1.5px;height:1px;background:#555;"></div>
<div style="left:9.5px;top:884px;width:1.5px;height:1px;background:#555;"></div>
<div style="left:9.5px;top:888px;width:1.5px;height:1px;background:#555;"></div>
<div style="left:8px;top:892.5px;width:5px;height:1.5px;background:#222;"></div>
<div style="left:9.5px;top:897px;width:1.5px;height:1px;background:#555;"></div>
<div style="left:9.5px;top:902px;width:1.5px;height:1px;background:#555;"></div>
<div style="left:9.5px;top:907px;width:1.5px;height:1px;background:#555;"></div>
<div style="left:9.5px;top:911px;width:1.5px;height:1px;background:#555;"></div>
<div style="left:8px;top:915.5px;width:5px;height:1.5px;background:#222;"></div>
<div style="left:9.5px;top:920px;width:1.5px;height:1px;background:#555;"></div>
<div style="left:9.5px;top:925px;width:1.5px;height:1px;background:#555;"></div>
<div style="left:9.5px;top:929px;width:1.5px;height:1px;background:#555;"></div>
<div style="left:9.5px;top:934px;width:1.5px;height:1px;background:#555;"></div>
<div style="left:8px;top:938.5px;width:5px;height:1.5px;background:#222;"></div>
<div style="left:9.5px;top:943px;width:1.5px;height:1px;background:#555;"></div>
<div style="left:9.5px;top:948px;width:1.5px;height:1px;background:#555;"></div>
<div style="left:9.5px;top:952px;width:1.5px;height:1px;background:#555;"></div>
<div style="left:9.5px;top:957px;width:1.5px;height:1px;background:#555;"></div>
<div style="left:8px;top:960.5px;width:5px;height:1.5px;background:#222;"></div>
<div style="left:9.5px;top:966px;width:1.5px;height:1px;background:#555;"></div>
<div style="left:9.5px;top:971px;width:1.5px;height:1px;background:#555;"></div>
<div style="left:9.5px;top:975px;width:1.5px;height:1px;background:#555;"></div>
<div style="left:9.5px;top:980px;width:1.5px;height:1px;background:#555;"></div>
<div style="left:8px;top:983.5px;width:5px;height:1.5px;background:#222;"></div>
<div style="left:9.5px;top:989px;width:1.5px;height:1px;background:#555;"></div>
<div style="left:9.5px;top:993px;width:1.5px;height:1px;background:#555;"></div>
<div style="left:9.5px;top:998px;width:1.5px;height:1px;background:#555;"></div>
<div style="left:9.5px;top:1003px;width:1.5px;height:1px;background:#555;"></div>
<div style="left:8px;top:1006.5px;width:5px;height:1.5px;background:#222;"></div>
<div style="left:9.5px;top:1012px;width:1.5px;height:1px;background:#555;"></div>
<div style="left:9.5px;top:1016px;width:1.5px;height:1px;background:#555;"></div>
<div style="left:9.5px;top:1021px;width:1.5px;height:1px;background:#555;"></div>
<div style="left:9.5px;top:1026px;width:1.5px;height:1px;background:#555;"></div>
<div style="left:8px;top:1029.5px;width:5px;height:1.5px;background:#222;"></div>
<div style="left:9.5px;top:1035px;width:1.5px;height:1px;background:#555;"></div>
<div style="left:9.5px;top:1039px;width:1.5px;height:1px;background:#555;"></div>
<div style="left:9.5px;top:1044px;width:1.5px;height:1px;background:#555;"></div>
<div style="left:9.5px;top:1048px;width:1.5px;height:1px;background:#555;"></div>
<div style="left:8px;top:1052.5px;width:5px;height:1.5px;background:#222;"></div>
<div style="left:7px;top:779px;width:13px;height:11px;background:#f4bfbf;"></div>
<span class="t" style="top:778.0px;font-size:9.5px;line-height:16px;color:#5e2626;left:9px;transform-origin:0 50%;transform:scaleX(1.050);">dB</span>
<div style="left:20px;top:824px;width:1600px;height:25px;background:#fff;"></div>
<div style="left:20px;top:848px;width:1583px;height:1px;background:#5d6972;"></div>
<svg class="a" style="left:99px;top:838px" width="1504" height="11" viewBox="99 838 1504 11" stroke="#444" stroke-width="1" shape-rendering="crispEdges"><path d="M100.5 841V849M110.5 845V849M121.5 845V849M131.5 845V849M141.5 845V849M152.5 843V849M162.5 845V849M172.5 845V849M182.5 845V849M193.5 845V849M203.5 841V849M213.5 845V849M224.5 845V849M234.5 845V849M244.5 845V849M255.5 843V849M265.5 845V849M275.5 845V849M286.5 845V849M296.5 845V849M306.5 841V849M317.5 845V849M327.5 845V849M337.5 845V849M347.5 845V849M358.5 843V849M368.5 845V849M378.5 845V849M389.5 845V849M399.5 845V849M409.5 841V849M420.5 845V849M430.5 845V849M440.5 845V849M451.5 845V849M461.5 843V849M471.5 845V849M481.5 845V849M492.5 845V849M502.5 845V849M512.5 841V849M523.5 845V849M533.5 845V849M543.5 845V849M554.5 845V849M564.5 843V849M574.5 845V849M585.5 845V849M595.5 845V849M605.5 845V849M616.5 841V849M626.5 845V849M636.5 845V849M646.5 845V849M657.5 845V849M667.5 843V849M677.5 845V849M688.5 845V849M698.5 845V849M708.5 845V849M719.5 841V849M729.5 845V849M739.5 845V849M750.5 845V849M760.5 845V849M770.5 843V849M780.5 845V849M791.5 845V849M801.5 845V849M811.5 845V849M822.5 841V849M832.5 845V849M842.5 845V849M853.5 845V849M863.5 845V849M873.5 843V849M884.5 845V849M894.5 845V849M904.5 845V849M914.5 845V849M925.5 841V849M935.5 845V849M945.5 845V849M956.5 845V849M966.5 845V849M976.5 843V849M987.5 845V849M997.5 845V849M1007.5 845V849M1018.5 845V849M1028.5 841V849M1038.5 845V849M1049.5 845V849M1059.5 845V849M1069.5 845V849M1079.5 843V849M1090.5 845V849M1100.5 845V849M1110.5 845V849M1121.5 845V849M1131.5 841V849M1141.5 845V849M1152.5 845V849M1162.5 845V849M1172.5 845V849M1183.5 843V849M1193.5 845V849M1203.5 845V849M1213.5 845V849M1224.5 845V849M1234.5 841V849M1244.5 845V849M1255.5 845V849M1265.5 845V849M1275.5 845V849M1286.5 843V849M1296.5 845V849M1306.5 845V849M1317.5 845V849M1327.5 845V849M1337.5 841V849M1348.5 845V849M1358.5 845V849M1368.5 845V849M1378.5 845V849M1389.5 843V849M1399.5 845V849M1409.5 845V849M1420.5 845V849M1430.5 845V849M1440.5 841V849M1451.5 845V849M1461.5 845V849M1471.5 845V849M1482.5 845V849M1492.5 843V849M1502.5 845V849M1512.5 845V849M1523.5 845V849M1533.5 845V849M1543.5 841V849M1554.5 845V849M1564.5 845V849M1574.5 845V849M1585.5 845V849M1595.5 843V849"/></svg>
<span class="t" style="top:823.0px;font-size:11px;line-height:16px;color:#222;left:100px;transform-origin:0 50%;transform:scaleX(1.020);">00:00:28.50</span>
<span class="t" style="top:823.0px;font-size:11px;line-height:16px;color:#222;left:203px;transform-origin:0 50%;transform:scaleX(1.020);">00:00:29.00</span>
<span class="t" style="top:823.0px;font-size:11px;line-height:16px;color:#222;left:306px;transform-origin:0 50%;transform:scaleX(1.020);">00:00:29.50</span>
<span class="t" style="top:823.0px;font-size:11px;line-height:16px;color:#222;left:409px;transform-origin:0 50%;transform:scaleX(1.020);">00:00:30.00</span>
<span class="t" style="top:823.0px;font-size:11px;line-height:16px;color:#222;left:512px;transform-origin:0 50%;transform:scaleX(1.020);">00:00:30.50</span>
<span class="t" style="top:823.0px;font-size:11px;line-height:16px;color:#222;left:616px;transform-origin:0 50%;transform:scaleX(1.020);">00:00:31.00</span>
<span class="t" style="top:823.0px;font-size:11px;line-height:16px;color:#222;left:719px;transform-origin:0 50%;transform:scaleX(1.020);">00:00:31.50</span>
<span class="t" style="top:823.0px;font-size:11px;line-height:16px;color:#222;left:822px;transform-origin:0 50%;transform:scaleX(1.020);">00:00:32.00</span>
<span class="t" style="top:823.0px;font-size:11px;line-height:16px;color:#222;left:925px;transform-origin:0 50%;transform:scaleX(1.020);">00:00:32.50</span>
<span class="t" style="top:823.0px;font-size:11px;line-height:16px;color:#222;left:1028px;transform-origin:0 50%;transform:scaleX(1.020);">00:00:33.00</span>
<span class="t" style="top:823.0px;font-size:11px;line-height:16px;color:#222;left:1131px;transform-origin:0 50%;transform:scaleX(1.020);">00:00:33.50</span>
<span class="t" style="top:823.0px;font-size:11px;line-height:16px;color:#222;left:1234px;transform-origin:0 50%;transform:scaleX(1.020);">00:00:34.00</span>
<span class="t" style="top:823.0px;font-size:11px;line-height:16px;color:#222;left:1337px;transform-origin:0 50%;transform:scaleX(1.020);">00:00:34.50</span>
<span class="t" style="top:823.0px;font-size:11px;line-height:16px;color:#222;left:1440px;transform-origin:0 50%;transform:scaleX(1.020);">00:00:35.00</span>
<span class="t" style="top:823.0px;font-size:11px;line-height:16px;color:#222;left:1543px;transform-origin:0 50%;transform:scaleX(1.020);">00:00:35.50</span>
<div style="left:20px;top:849px;width:80px;height:162px;background:#fff;"></div>
<div style="left:99px;top:849px;width:1px;height:162px;background:#56626b;"></div>
<div style="left:20px;top:887px;width:1583px;height:1px;background:#5d6972;"></div>
<div style="left:20px;top:1004px;width:1583px;height:1px;background:#5d6972;"></div>
<div style="left:100px;top:927px;width:1503px;height:38px;background:#e3effb;"></div>
<div style="left:20px;top:965px;width:1583px;height:1px;background:#5d6972;"></div>
<div style="left:20px;top:926px;width:80px;height:40px;background:#e9f3fc;border:2px solid #769fb9;"></div>
<div style="left:100px;top:926px;width:1503px;height:1px;background:#7b6a6a;"></div>
<div style="left:27px;top:864.0px;width:2px;height:1px;background:#9a9a9a;"></div>
<div style="left:27px;top:866.8px;width:2px;height:1px;background:#9a9a9a;"></div>
<div style="left:27px;top:869.6px;width:2px;height:1px;background:#9a9a9a;"></div>
<div style="left:27px;top:872.4px;width:2px;height:1px;background:#9a9a9a;"></div>
<span class="t" style="top:860.5px;font-size:12px;line-height:16px;color:#222;left:36px;transform-origin:0 50%;transform:scaleX(0.844);">レイヤー 00</span>
<div style="left:27px;top:903.0px;width:2px;height:1px;background:#9a9a9a;"></div>
<div style="left:27px;top:905.8px;width:2px;height:1px;background:#9a9a9a;"></div>
<div style="left:27px;top:908.6px;width:2px;height:1px;background:#9a9a9a;"></div>
<div style="left:27px;top:911.4px;width:2px;height:1px;background:#9a9a9a;"></div>
<span class="t" style="top:899.5px;font-size:12px;line-height:16px;color:#222;left:36px;transform-origin:0 50%;transform:scaleX(0.844);">レイヤー 01</span>
<div style="left:27px;top:942.0px;width:2px;height:1px;background:#9a9a9a;"></div>
<div style="left:27px;top:944.8px;width:2px;height:1px;background:#9a9a9a;"></div>
<div style="left:27px;top:947.6px;width:2px;height:1px;background:#9a9a9a;"></div>
<div style="left:27px;top:950.4px;width:2px;height:1px;background:#9a9a9a;"></div>
<span class="t" style="top:938.5px;font-size:12px;line-height:16px;color:#222;left:36px;transform-origin:0 50%;transform:scaleX(0.844);">レイヤー 02</span>
<div style="left:27px;top:981.0px;width:2px;height:1px;background:#9a9a9a;"></div>
<div style="left:27px;top:983.8px;width:2px;height:1px;background:#9a9a9a;"></div>
<div style="left:27px;top:986.6px;width:2px;height:1px;background:#9a9a9a;"></div>
<div style="left:27px;top:989.4px;width:2px;height:1px;background:#9a9a9a;"></div>
<span class="t" style="top:977.5px;font-size:12px;line-height:16px;color:#222;left:36px;transform-origin:0 50%;transform:scaleX(0.844);">レイヤー 03</span>
<div style="left:100px;top:852px;width:1503px;height:35px;background:#00006e;"></div>
<span class="t" style="top:861.5px;font-size:11.5px;line-height:16px;color:#fff;font-weight:bold;left:107px;transform-origin:0 50%;transform:scaleX(1.050);">2025-08-15 13-18-56.mkv</span>
<div style="left:100px;top:888px;width:1503px;height:3px;background:#f4c6c6;"></div>
<div style="left:100px;top:891px;width:1503px;height:35px;background:#c94a4a;"></div>
<svg class="a" style="left:100px;top:891px" width="1503" height="35" viewBox="100 891 1503 35"><path d="M100.5 901.0V916.4M101.5 903.1V919.6M102.5 896.0V914.8M103.5 902.4V913.4M104.5 900.9V915.5M105.5 902.0V920.1M106.5 903.7V914.0M107.5 899.3V915.7M108.5 899.0V912.9M109.5 900.2V914.1M110.5 904.1V913.7M111.5 902.4V916.1M112.5 904.0V913.8M113.5 903.4V913.6M114.5 903.3V913.4M115.5 903.3V915.9M116.5 902.2V916.5M117.5 902.9V917.4M118.5 896.5V920.5M119.5 902.7V917.3M120.5 902.8V913.3M121.5 903.8V918.5M122.5 900.6V913.1M123.5 903.9V913.2M124.5 898.4V913.9M125.5 903.3V915.5M126.5 902.0V915.6M127.5 897.4V915.2M128.5 903.7V917.2M129.5 899.1V913.1M130.5 903.8V918.6M131.5 899.2V915.5M132.5 904.0V913.1M133.5 901.8V912.6M134.5 904.6V914.3M135.5 903.9V915.0M136.5 900.1V912.4M137.5 897.9V916.4M138.5 903.1V914.7M139.5 903.6V913.5M140.5 901.7V914.1M141.5 904.6V913.4M142.5 904.7V914.7M143.5 897.3V912.9M144.5 904.0V912.7M145.5 902.4V917.1M146.5 901.3V915.9M147.5 894.0V924.9M148.5 892.0V921.9M149.5 896.6V925.0M150.5 896.7V924.5M151.5 898.8V921.3M152.5 896.2V918.1M153.5 900.4V923.7M154.5 894.9V916.3M155.5 900.2V918.6M156.5 900.7V919.7M157.5 896.5V915.7M158.5 900.5V917.1M159.5 900.1V915.1M160.5 895.6V915.7M161.5 895.7V914.5M162.5 899.3V914.0M163.5 901.4V915.4M164.5 902.7V914.4M165.5 902.8V913.9M166.5 901.1V916.3M167.5 896.7V914.0M168.5 902.2V913.7M169.5 903.5V916.0M170.5 901.3V914.2M171.5 900.4V918.5M172.5 903.9V913.8M173.5 902.5V914.3M174.5 900.7V918.1M175.5 903.4V915.3M176.5 901.2V915.6M177.5 903.9V914.1M178.5 901.2V915.2M179.5 897.5V919.2M180.5 897.3V920.9M181.5 897.8V914.6M182.5 902.5V915.9M183.5 901.3V915.9M184.5 897.4V920.8M185.5 901.1V914.5M186.5 903.7V918.7M187.5 898.1V915.8M188.5 901.4V916.6M189.5 903.4V914.1M190.5 901.9V913.7M191.5 903.4V912.9M192.5 903.4V919.0M193.5 897.2V917.5M194.5 900.5V918.8M195.5 897.8V913.2M196.5 904.6V913.0M197.5 903.0V915.1M198.5 897.3V912.4M199.5 898.9V913.1M200.5 902.3V912.5M201.5 897.8V912.5M202.5 903.5V912.2M203.5 902.5V913.7M204.5 898.1V913.1M205.5 901.1V913.1M206.5 901.8V914.7M207.5 903.1V915.2M208.5 902.9V913.0M209.5 904.2V912.9M210.5 904.9V916.6M211.5 902.7V919.2M212.5 893.7V922.9M213.5 898.2V919.0M214.5 897.1V921.2M215.5 897.4V917.4M216.5 896.6V918.4M217.5 899.0V918.2M218.5 901.2V921.1M219.5 900.6V919.8M220.5 896.0V917.9M221.5 897.0V918.0M222.5 894.9V916.9M223.5 898.1V915.7M224.5 903.2V916.2M225.5 903.2V916.2M226.5 902.7V916.4M227.5 903.4V915.7M228.5 903.4V917.8M229.5 898.6V920.5M230.5 900.6V913.5M231.5 899.0V915.2M232.5 902.3V915.2M233.5 901.5V913.5M234.5 898.5V917.3M235.5 902.9V920.2M236.5 903.4V913.8M237.5 898.1V914.2M238.5 900.4V913.9M239.5 902.7V913.3M240.5 901.1V914.7M241.5 900.5V914.5M242.5 902.0V914.6M243.5 899.7V913.9M244.5 903.1V915.1M245.5 897.0V917.6M246.5 899.1V916.0M247.5 901.4V915.9M248.5 902.2V915.9M249.5 899.8V919.2M250.5 901.3V917.8M251.5 900.3V915.0M252.5 902.1V921.3M253.5 901.5V916.3M254.5 901.5V917.1M255.5 901.3V914.4M256.5 900.1V918.9M257.5 901.4V919.8M258.5 900.9V921.1M259.5 901.6V918.4M260.5 898.9V914.3M261.5 895.3V915.3M262.5 901.8V914.6M263.5 902.1V915.1M264.5 900.7V915.3M265.5 896.9V916.9M266.5 896.1V921.3M267.5 900.5V919.8M268.5 899.6V915.4M269.5 896.9V915.2M270.5 902.0V914.5M271.5 900.9V914.7M272.5 895.1V919.3M273.5 901.6V917.7M274.5 901.9V914.7M275.5 902.6V919.1M276.5 901.4V918.7M277.5 892.0V924.2M278.5 892.0V920.4M279.5 892.0V923.1M280.5 896.7V921.8M281.5 896.2V922.7M282.5 897.8V917.9M283.5 896.7V920.9M284.5 898.5V919.3M285.5 898.9V918.4M286.5 899.1V919.5M287.5 897.0V918.3M288.5 898.1V921.1M289.5 899.8V917.7M290.5 896.3V921.6M291.5 897.9V915.8M292.5 899.1V919.0M293.5 901.4V915.7M294.5 899.6V914.6M295.5 900.6V917.9M296.5 900.3V914.4M297.5 902.3V916.0M298.5 901.9V914.4M299.5 896.5V915.8M300.5 900.0V921.4M301.5 900.6V914.9M302.5 902.9V913.8M303.5 897.1V914.3M304.5 900.4V914.9M305.5 903.0V913.9M306.5 897.9V915.4M307.5 902.6V913.6M308.5 903.5V915.1M309.5 895.5V915.0M310.5 900.6V914.7M311.5 901.1V914.6M312.5 898.0V921.1M313.5 902.7V918.6M314.5 901.9V913.7M315.5 902.1V915.8M316.5 901.6V915.0M317.5 902.6V914.6M318.5 903.2V913.5M319.5 900.7V914.3M320.5 902.8V920.2M321.5 902.5V913.2M322.5 903.3V913.6M323.5 903.1V913.5M324.5 903.2V915.6M325.5 903.6V914.3M326.5 901.9V913.0M327.5 898.5V914.5M328.5 900.9V916.1M329.5 901.6V914.7M330.5 899.4V913.1M331.5 903.6V913.2M332.5 902.4V914.9M333.5 901.6V915.3M334.5 899.6V917.3M335.5 901.5V916.6M336.5 901.7V914.0M337.5 903.7V913.6M338.5 903.9V914.4M339.5 898.8V920.0M340.5 903.3V914.0M341.5 902.1V919.9M342.5 893.7V924.5M343.5 896.4V917.9M344.5 893.6V919.4M345.5 895.6V921.8M346.5 900.0V924.2M347.5 899.8V918.5M348.5 894.0V918.0M349.5 895.7V918.4M350.5 900.3V915.9M351.5 901.3V916.1M352.5 901.2V914.8M353.5 898.0V916.2M354.5 901.0V917.6M355.5 901.5V916.8M356.5 894.9V920.6M357.5 902.7V915.0M358.5 902.3V915.3M359.5 899.9V919.1M360.5 896.2V915.3M361.5 901.2V914.6M362.5 902.6V918.5M363.5 902.7V913.8M364.5 899.4V916.2M365.5 903.2V914.8M366.5 901.6V917.5M367.5 902.6V918.5M368.5 903.0V913.8M369.5 899.2V914.7M370.5 901.7V914.2M371.5 897.8V914.7M372.5 901.6V915.2M373.5 901.5V914.0M374.5 899.3V916.0M375.5 897.9V919.7M376.5 901.4V915.6M377.5 895.9V917.0M378.5 897.0V919.0M379.5 899.6V915.1M380.5 898.4V920.6M381.5 900.5V913.7M382.5 903.2V916.6M383.5 902.7V916.5M384.5 903.0V916.9M385.5 902.9V913.7M386.5 901.7V913.7M387.5 904.1V914.6M388.5 898.2V913.0M389.5 903.6V917.4M390.5 901.5V914.1M391.5 903.5V918.5M392.5 900.0V914.4M393.5 903.0V916.5M394.5 903.2V913.4M395.5 903.0V917.8M396.5 903.8V912.5M397.5 903.1V915.0M398.5 903.2V912.8M399.5 897.6V913.0M400.5 902.0V913.8M401.5 903.9V912.0M402.5 902.0V914.2M403.5 904.2V915.1M404.5 904.2V914.6M405.5 903.1V915.9M406.5 898.4V919.3M407.5 894.7V918.7M408.5 895.9V917.6M409.5 894.9V921.4M410.5 900.5V923.3M411.5 901.7V917.3M412.5 899.9V916.0M413.5 901.3V918.0M414.5 897.0V918.8M415.5 899.1V916.0M416.5 901.8V916.9M417.5 901.9V913.7M418.5 901.9V914.3M419.5 901.0V917.7M420.5 903.7V914.7M421.5 901.9V912.9M422.5 899.3V914.5M423.5 903.0V913.1M424.5 898.9V915.6M425.5 901.5V913.7M426.5 903.4V915.0M427.5 901.4V914.9M428.5 902.8V913.1M429.5 903.7V913.5M430.5 903.5V916.0M431.5 902.0V917.2M432.5 902.8V917.4M433.5 903.8V915.9M434.5 904.4V913.0M435.5 904.0V913.0M436.5 900.3V912.6M437.5 903.0V917.0M438.5 902.2V919.5M439.5 901.1V914.8M440.5 902.2V915.4M441.5 896.5V914.5M442.5 902.6V914.7M443.5 896.1V914.9M444.5 902.3V913.5M445.5 902.0V913.5M446.5 903.4V916.2M447.5 896.7V916.0M448.5 900.6V913.5M449.5 902.7V915.3M450.5 898.4V913.7M451.5 902.4V914.4M452.5 902.2V914.4M453.5 902.4V916.5M454.5 897.0V914.0M455.5 901.7V914.3M456.5 902.3V916.6M457.5 903.2V916.6M458.5 896.2V916.4M459.5 900.9V916.5M460.5 900.4V914.7M461.5 903.4V915.8M462.5 896.7V914.7M463.5 898.6V913.6M464.5 902.6V914.5M465.5 902.2V914.0M466.5 898.9V915.4M467.5 902.1V914.1M468.5 897.2V915.0M469.5 903.0V918.4M470.5 895.7V914.8M471.5 895.1V923.3M472.5 895.6V920.8M473.5 894.7V925.0M474.5 897.8V921.2M475.5 896.7V925.0M476.5 899.5V920.3M477.5 900.0V917.6M478.5 897.2V919.3M479.5 900.7V923.8M480.5 900.3V918.0M481.5 898.2V918.0M482.5 898.1V916.5M483.5 900.9V916.0M484.5 899.4V915.0M485.5 901.6V915.7M486.5 901.5V916.8M487.5 900.3V916.1M488.5 898.9V918.6M489.5 898.6V915.5M490.5 901.9V916.6M491.5 901.1V915.9M492.5 901.0V916.2M493.5 898.9V914.9M494.5 896.5V919.1M495.5 900.1V915.6M496.5 901.5V914.9M497.5 896.1V920.0M498.5 899.7V914.0M499.5 902.8V919.4M500.5 897.6V914.9M501.5 899.3V916.2M502.5 902.2V914.6M503.5 894.7V921.1M504.5 902.1V915.7M505.5 899.4V916.3M506.5 901.6V919.2M507.5 898.2V917.6M508.5 902.5V915.5M509.5 900.8V914.2M510.5 902.9V914.3M511.5 897.4V915.4M512.5 899.9V916.4M513.5 900.2V914.4M514.5 901.9V913.7M515.5 902.6V914.5M516.5 901.5V914.1M517.5 900.6V914.3M518.5 903.1V918.1M519.5 901.3V914.7M520.5 902.5V913.9M521.5 896.8V915.1M522.5 903.3V918.6M523.5 902.5V919.5M524.5 903.1V914.1M525.5 902.7V916.3M526.5 902.5V918.1M527.5 899.4V919.3M528.5 901.2V918.8M529.5 902.7V916.1M530.5 902.0V917.2M531.5 902.8V918.1M532.5 900.8V915.1M533.5 901.3V914.5M534.5 896.1V915.7M535.5 902.7V915.3M536.5 894.1V925.0M537.5 894.4V922.6M538.5 894.0V919.2M539.5 897.4V919.6M540.5 892.2V917.2M541.5 893.5V919.2M542.5 893.4V919.5M543.5 896.3V918.0M544.5 897.3V917.0M545.5 899.7V918.7M546.5 895.3V916.6M547.5 894.5V916.3M548.5 900.9V921.1M549.5 901.7V921.4M550.5 902.0V916.6M551.5 899.4V916.9M552.5 901.7V915.0M553.5 901.4V916.0M554.5 900.2V920.7M555.5 900.1V915.4M556.5 900.0V918.4M557.5 902.3V916.2M558.5 895.6V917.2M559.5 901.7V921.8M560.5 902.2V916.6M561.5 897.2V915.6M562.5 902.1V915.2M563.5 900.0V915.8M564.5 896.7V916.5M565.5 900.4V915.1M566.5 901.8V919.7M567.5 901.1V920.6M568.5 900.5V915.5M569.5 898.5V916.4M570.5 898.9V916.0M571.5 897.7V916.1M572.5 901.5V916.0M573.5 901.7V918.0M574.5 900.4V915.8M575.5 902.1V915.7M576.5 902.5V918.0M577.5 900.1V914.4M578.5 901.9V914.7M579.5 900.3V917.1M580.5 903.1V914.9M581.5 903.2V916.7M582.5 903.1V913.9M583.5 903.3V913.7M584.5 901.6V914.2M585.5 903.6V915.3M586.5 900.3V915.2M587.5 900.8V914.2M588.5 900.9V914.2M589.5 902.7V917.6M590.5 896.9V920.6M591.5 901.0V915.2M592.5 901.1V913.2M593.5 903.7V916.8M594.5 902.8V913.4M595.5 904.5V912.9M596.5 903.2V913.1M597.5 897.3V912.9M598.5 899.6V913.4M599.5 903.9V912.8M600.5 892.0V921.6M601.5 895.8V923.1M602.5 897.9V917.0M603.5 899.2V919.5M604.5 899.5V924.1M605.5 897.3V921.2M606.5 900.2V917.7M607.5 900.4V916.4M608.5 895.9V917.5M609.5 901.4V914.8M610.5 900.0V914.5M611.5 902.6V918.5M612.5 902.6V914.7M613.5 903.2V916.6M614.5 903.3V914.2M615.5 903.4V913.7M616.5 897.8V913.5M617.5 903.4V914.1M618.5 898.8V919.8M619.5 904.2V915.6M620.5 904.1V913.3M621.5 904.2V917.1M622.5 904.6V914.5M623.5 904.6V913.5M624.5 902.5V915.1M625.5 902.6V913.9M626.5 904.5V918.1M627.5 904.3V912.1M628.5 900.8V912.1M629.5 901.9V915.9M630.5 904.5V912.4M631.5 902.1V916.3M632.5 905.0V913.1M633.5 902.1V916.0M634.5 902.1V915.1M635.5 903.4V913.5M636.5 898.0V919.6M637.5 901.2V913.6M638.5 901.4V915.8M639.5 904.2V914.0M640.5 902.1V913.7M641.5 897.8V914.2M642.5 903.9V915.1M643.5 902.8V913.4M644.5 904.1V913.9M645.5 899.8V920.1M646.5 897.6V912.7M647.5 903.1V914.0M648.5 903.5V917.6M649.5 902.5V915.2M650.5 902.9V913.1M651.5 903.7V915.7M652.5 903.9V915.6M653.5 904.2V916.7M654.5 901.0V913.8M655.5 903.7V915.5M656.5 897.0V920.1M657.5 900.4V913.2M658.5 898.1V919.8M659.5 903.8V915.9M660.5 900.9V917.3M661.5 904.1V914.9M662.5 904.1V913.5M663.5 904.0V913.0M664.5 902.9V913.5M665.5 894.9V922.2M666.5 892.0V925.0M667.5 895.8V922.4M668.5 894.8V922.0M669.5 899.0V921.5M670.5 898.9V922.4M671.5 899.6V922.7M672.5 899.4V917.5M673.5 900.8V917.7M674.5 901.3V916.6M675.5 899.8V918.8M676.5 895.6V915.7M677.5 899.9V914.3M678.5 901.3V914.5M679.5 895.8V915.9M680.5 900.6V919.2M681.5 900.6V915.7M682.5 902.7V921.3M683.5 896.5V914.8M684.5 900.6V918.9M685.5 898.5V916.0M686.5 902.2V920.0M687.5 903.1V914.5M688.5 903.6V913.8M689.5 897.9V918.9M690.5 902.1V913.8M691.5 901.0V915.9M692.5 896.5V913.8M693.5 898.4V914.0M694.5 898.4V920.4M695.5 899.5V913.3M696.5 903.9V913.1M697.5 901.8V919.6M698.5 902.3V915.0M699.5 902.3V914.4M700.5 902.6V920.1M701.5 897.3V914.8M702.5 897.2V916.0M703.5 902.4V914.6M704.5 903.0V913.7M705.5 902.9V920.4M706.5 903.0V914.2M707.5 900.5V914.2M708.5 902.8V914.9M709.5 902.9V918.9M710.5 898.0V918.4M711.5 902.5V917.3M712.5 904.1V919.3M713.5 903.0V913.6M714.5 900.0V912.8M715.5 902.3V917.1M716.5 902.9V915.6M717.5 902.6V919.0M718.5 902.9V918.2M719.5 903.1V912.8M720.5 904.1V913.3M721.5 902.8V913.4M722.5 903.1V913.9M723.5 901.9V919.0M724.5 903.5V914.2M725.5 902.8V919.8M726.5 902.7V920.3M727.5 903.9V918.8M728.5 903.1V913.8M729.5 897.1V913.3M730.5 894.4V925.0M731.5 892.0V918.5M732.5 892.0V920.9M733.5 892.0V922.9M734.5 897.0V919.5M735.5 900.0V920.8M736.5 895.1V918.2M737.5 899.0V916.0M738.5 898.7V919.3M739.5 900.1V918.7M740.5 901.0V923.3M741.5 901.3V918.4M742.5 902.0V922.1M743.5 901.2V918.5M744.5 901.2V919.6M745.5 899.0V920.5M746.5 900.4V915.6M747.5 901.2V919.0M748.5 895.2V920.8M749.5 899.9V915.5M750.5 899.2V914.7M751.5 899.4V917.2M752.5 900.0V914.8M753.5 895.0V916.9M754.5 901.4V915.0M755.5 902.3V915.5M756.5 900.2V915.3M757.5 901.4V920.4M758.5 898.1V917.3M759.5 901.0V917.8M760.5 902.3V917.3M761.5 897.4V917.1M762.5 898.8V918.9M763.5 896.1V917.7M764.5 897.2V917.0M765.5 900.5V922.9M766.5 899.6V916.3M767.5 900.9V918.2M768.5 900.4V916.1M769.5 901.0V915.2M770.5 899.9V915.8M771.5 895.5V920.3M772.5 901.2V916.6M773.5 901.1V917.1M774.5 899.9V918.1M775.5 902.3V914.5M776.5 899.7V914.4M777.5 901.9V917.4M778.5 896.6V915.0M779.5 897.6V917.1M780.5 901.4V914.9M781.5 901.9V921.8M782.5 897.9V914.2M783.5 903.0V915.6M784.5 898.1V917.2M785.5 900.8V920.5M786.5 899.8V915.4M787.5 902.0V921.1M788.5 898.1V914.6M789.5 901.5V914.2M790.5 902.8V914.5M791.5 901.8V916.1M792.5 898.1V915.1M793.5 898.5V914.2M794.5 897.6V925.0M795.5 894.9V919.7M796.5 895.4V921.3M797.5 897.0V919.1M798.5 896.5V920.3M799.5 893.2V924.9M800.5 898.4V917.1M801.5 898.2V917.6M802.5 898.5V916.3M803.5 898.4V922.5M804.5 899.6V916.1M805.5 900.2V915.1M806.5 898.6V920.9M807.5 902.0V915.7M808.5 896.4V915.3M809.5 900.5V915.1M810.5 902.6V915.9M811.5 897.8V913.9M812.5 900.5V914.6M813.5 902.8V918.6M814.5 901.9V914.4M815.5 904.0V917.9M816.5 901.7V917.5M817.5 902.9V913.7M818.5 903.8V912.9M819.5 903.3V914.8M820.5 898.1V919.9M821.5 903.2V913.3M822.5 901.3V915.4M823.5 903.7V914.6M824.5 902.8V917.0M825.5 902.0V912.9M826.5 902.0V912.4M827.5 902.9V914.1M828.5 899.9V916.8M829.5 901.3V915.8M830.5 902.5V916.8M831.5 902.4V921.0M832.5 901.0V914.8M833.5 901.5V913.4M834.5 902.1V914.8M835.5 904.1V920.1M836.5 898.6V913.5M837.5 901.7V914.5M838.5 902.0V913.7M839.5 901.0V919.5M840.5 903.6V913.4M841.5 901.5V915.3M842.5 901.1V915.0M843.5 903.9V914.0M844.5 898.3V916.5M845.5 902.7V912.9M846.5 901.7V917.7M847.5 898.3V919.2M848.5 903.2V914.2M849.5 903.1V914.1M850.5 900.8V915.7M851.5 904.1V919.0M852.5 901.3V914.1M853.5 903.2V912.9M854.5 897.0V913.8M855.5 897.7V917.9M856.5 901.4V917.0M857.5 899.6V915.3M858.5 901.5V913.7M859.5 896.5V925.0M860.5 895.1V924.7M861.5 898.1V921.1M862.5 898.9V920.8M863.5 898.6V916.9M864.5 897.8V919.0M865.5 900.1V919.9M866.5 896.9V920.2M867.5 900.4V916.4M868.5 894.9V915.1M869.5 901.1V916.2M870.5 896.7V915.5M871.5 901.4V915.4M872.5 901.3V919.3M873.5 897.4V916.1M874.5 903.1V914.8M875.5 900.1V917.7M876.5 901.6V914.4M877.5 901.0V915.5M878.5 902.2V913.8M879.5 903.2V913.9M880.5 902.6V914.5M881.5 902.6V913.4M882.5 901.1V913.6M883.5 903.9V912.8M884.5 897.6V913.1M885.5 902.0V912.8M886.5 903.8V919.9M887.5 898.8V912.9M888.5 904.4V914.5M889.5 897.6V916.9M890.5 900.2V912.5M891.5 903.9V915.0M892.5 896.7V920.3M893.5 900.9V916.4M894.5 903.2V915.4M895.5 903.2V914.9M896.5 901.2V915.4M897.5 901.8V917.8M898.5 901.4V912.7M899.5 897.4V915.5M900.5 901.5V913.6M901.5 902.1V913.6M902.5 901.5V919.7M903.5 904.8V912.8M904.5 904.8V915.5M905.5 900.4V915.0M906.5 898.7V915.0M907.5 904.2V912.2M908.5 899.5V912.1M909.5 901.9V912.4M910.5 905.1V917.8M911.5 904.4V917.6M912.5 897.8V913.2M913.5 904.2V913.0M914.5 904.5V918.1M915.5 903.7V912.2M916.5 902.6V912.3M917.5 900.5V912.4M918.5 902.3V913.6M919.5 901.8V912.3M920.5 904.3V912.3M921.5 898.9V912.2M922.5 902.1V915.0M923.5 904.4V912.2M924.5 898.3V922.8M925.5 895.9V920.9M926.5 892.0V918.3M927.5 895.1V922.9M928.5 899.6V924.2M929.5 898.3V917.5M930.5 897.9V921.5M931.5 901.2V915.2M932.5 895.0V916.1M933.5 901.9V916.3M934.5 899.6V919.2M935.5 901.1V916.1M936.5 900.9V915.7M937.5 900.9V921.3M938.5 901.9V914.5M939.5 896.7V916.7M940.5 896.7V920.2M941.5 902.6V917.0M942.5 895.9V920.2M943.5 901.1V918.5M944.5 902.4V919.8M945.5 903.0V916.1M946.5 900.2V914.9M947.5 902.6V917.2M948.5 901.2V914.7M949.5 902.3V915.2M950.5 898.9V915.5M951.5 902.2V919.7M952.5 898.9V921.4M953.5 901.2V914.3M954.5 900.5V914.2M955.5 901.7V917.8M956.5 896.6V917.8M957.5 900.2V917.1M958.5 899.3V915.6M959.5 901.1V916.3M960.5 895.6V915.5M961.5 900.9V915.5M962.5 902.1V922.7M963.5 901.7V915.1M964.5 894.8V915.9M965.5 894.7V920.9M966.5 899.3V915.4M967.5 900.1V918.6M968.5 899.4V917.4M969.5 902.1V917.3M970.5 899.1V917.3M971.5 895.5V921.2M972.5 899.6V914.5M973.5 898.8V918.0M974.5 900.3V918.3M975.5 899.2V917.3M976.5 901.1V915.5M977.5 899.8V918.6M978.5 901.5V917.0M979.5 902.5V914.2M980.5 901.7V915.1M981.5 896.9V916.1M982.5 900.4V916.9M983.5 902.8V918.7M984.5 896.8V919.2M985.5 900.6V915.5M986.5 900.5V914.4M987.5 897.9V920.5M988.5 901.8V914.3M989.5 892.6V922.1M990.5 894.8V923.1M991.5 897.8V922.4M992.5 892.0V920.7M993.5 898.2V919.3M994.5 896.6V918.6M995.5 897.0V918.1M996.5 899.7V918.0M997.5 893.9V917.4M998.5 898.3V922.5M999.5 899.0V919.7M1000.5 899.6V917.8M1001.5 898.6V917.1M1002.5 900.9V915.3M1003.5 902.3V917.6M1004.5 900.0V916.6M1005.5 895.4V915.2M1006.5 902.2V914.9M1007.5 900.8V920.3M1008.5 898.0V913.9M1009.5 901.5V914.3M1010.5 899.9V915.5M1011.5 902.3V915.3M1012.5 902.7V915.4M1013.5 900.8V914.7M1014.5 903.4V915.3M1015.5 901.6V915.7M1016.5 898.8V916.7M1017.5 901.8V917.5M1018.5 902.4V913.9M1019.5 896.5V915.7M1020.5 898.6V913.7M1021.5 896.5V919.9M1022.5 900.6V921.5M1023.5 899.5V915.0M1024.5 900.5V915.8M1025.5 902.5V917.1M1026.5 902.6V914.6M1027.5 900.8V918.0M1028.5 902.8V918.5M1029.5 903.0V916.4M1030.5 897.4V915.3M1031.5 900.5V914.0M1032.5 902.0V916.6M1033.5 900.5V915.5M1034.5 897.7V916.5M1035.5 901.8V919.3M1036.5 901.5V914.7M1037.5 899.4V915.7M1038.5 898.0V914.1M1039.5 901.9V913.5M1040.5 902.3V914.2M1041.5 899.2V913.6M1042.5 901.8V914.1M1043.5 901.0V914.3M1044.5 898.3V918.3M1045.5 897.9V919.3M1046.5 901.8V914.5M1047.5 896.0V914.0M1048.5 902.3V913.8M1049.5 902.2V914.7M1050.5 902.9V920.6M1051.5 902.2V916.3M1052.5 903.1V914.1M1053.5 893.3V922.0M1054.5 892.0V921.1M1055.5 892.3V922.8M1056.5 896.0V920.3M1057.5 897.2V924.5M1058.5 897.0V920.1M1059.5 900.6V917.1M1060.5 899.9V920.8M1061.5 900.1V915.8M1062.5 897.6V916.9M1063.5 899.6V919.7M1064.5 896.2V917.6M1065.5 899.4V916.6M1066.5 899.7V916.2M1067.5 899.4V917.5M1068.5 901.6V915.4M1069.5 901.6V915.3M1070.5 902.7V921.9M1071.5 900.2V914.4M1072.5 902.4V919.6M1073.5 902.6V916.0M1074.5 902.3V914.0M1075.5 898.7V914.8M1076.5 896.6V914.6M1077.5 899.2V915.1M1078.5 902.9V913.5M1079.5 897.3V913.4M1080.5 903.7V913.7M1081.5 903.7V919.3M1082.5 900.1V915.6M1083.5 901.6V919.2M1084.5 901.3V917.7M1085.5 903.7V915.5M1086.5 901.9V916.0M1087.5 896.7V914.2M1088.5 903.0V914.7M1089.5 898.3V915.3M1090.5 902.6V916.5M1091.5 901.7V913.1M1092.5 898.3V915.9M1093.5 904.0V915.4M1094.5 903.3V912.6M1095.5 904.3V913.1M1096.5 904.2V915.4M1097.5 904.0V914.7M1098.5 897.3V918.3M1099.5 904.7V913.3M1100.5 904.7V913.0M1101.5 900.4V914.5M1102.5 903.7V915.4M1103.5 904.5V913.0M1104.5 904.1V912.5M1105.5 905.2V913.4M1106.5 904.7V911.8M1107.5 904.6V911.7M1108.5 904.3V913.2M1109.5 904.8V912.8M1110.5 904.5V914.4M1111.5 905.5V915.6M1112.5 902.2V911.9M1113.5 904.9V915.3M1114.5 904.3V914.2M1115.5 904.0V913.6M1116.5 902.9V912.3M1117.5 898.0V913.2M1118.5 892.5V918.8M1119.5 897.5V921.1M1120.5 898.9V918.7M1121.5 899.5V917.9M1122.5 893.0V916.3M1123.5 900.8V916.8M1124.5 895.9V916.9M1125.5 900.9V915.6M1126.5 902.5V918.0M1127.5 901.4V914.4M1128.5 898.4V913.9M1129.5 902.5V914.1M1130.5 902.8V918.6M1131.5 897.5V914.5M1132.5 902.6V914.6M1133.5 903.0V914.4M1134.5 902.9V914.2M1135.5 902.9V914.4M1136.5 902.8V915.7M1137.5 897.9V914.1M1138.5 903.1V914.3M1139.5 903.7V914.2M1140.5 900.3V913.5M1141.5 903.2V919.4M1142.5 903.9V916.9M1143.5 897.2V913.0M1144.5 903.2V914.6M1145.5 901.0V916.0M1146.5 902.7V916.9M1147.5 900.9V914.1M1148.5 899.4V919.4M1149.5 900.8V915.5M1150.5 902.0V917.0M1151.5 901.7V921.3M1152.5 902.5V920.8M1153.5 902.0V917.5M1154.5 901.5V915.5M1155.5 902.5V914.2M1156.5 901.8V915.7M1157.5 902.2V914.6M1158.5 900.7V914.2M1159.5 901.3V913.7M1160.5 900.1V914.6M1161.5 902.2V913.7M1162.5 898.1V915.4M1163.5 901.5V914.1M1164.5 901.0V920.8M1165.5 902.3V913.8M1166.5 896.1V919.8M1167.5 900.6V920.9M1168.5 901.3V918.4M1169.5 902.5V915.8M1170.5 902.8V920.3M1171.5 895.9V917.4M1172.5 902.7V914.8M1173.5 903.4V916.3M1174.5 903.5V918.3M1175.5 902.2V919.7M1176.5 902.8V915.8M1177.5 903.2V916.6M1178.5 902.5V913.8M1179.5 903.5V913.7M1180.5 901.3V920.7M1181.5 902.6V913.7M1182.5 903.3V918.6M1183.5 892.4V922.2M1184.5 894.0V921.6M1185.5 895.8V920.5M1186.5 893.5V919.1M1187.5 897.3V920.5M1188.5 898.8V917.6M1189.5 900.6V921.6M1190.5 898.5V922.1M1191.5 895.5V919.6M1192.5 901.8V918.8M1193.5 899.2V917.6M1194.5 900.0V917.6M1195.5 895.6V920.7M1196.5 900.3V915.6M1197.5 900.3V921.2M1198.5 903.1V914.6M1199.5 900.3V918.6M1200.5 902.9V914.0M1201.5 895.8V915.1M1202.5 895.6V915.1M1203.5 902.1V914.1M1204.5 898.9V917.8M1205.5 902.1V915.0M1206.5 902.2V916.3M1207.5 903.3V920.7M1208.5 900.6V915.1M1209.5 903.5V913.5M1210.5 903.3V914.5M1211.5 902.9V914.4M1212.5 902.6V914.3M1213.5 901.7V913.8M1214.5 903.5V914.1M1215.5 899.5V920.6M1216.5 900.7V916.1M1217.5 899.5V917.8M1218.5 897.8V921.4M1219.5 900.5V914.4M1220.5 900.1V915.2M1221.5 902.8V920.0M1222.5 901.8V917.5M1223.5 895.5V917.6M1224.5 899.3V921.1M1225.5 903.0V914.3M1226.5 898.5V917.0M1227.5 903.0V916.3M1228.5 897.5V915.6M1229.5 900.7V919.6M1230.5 898.4V917.0M1231.5 902.4V915.6M1232.5 903.0V913.9M1233.5 895.9V914.9M1234.5 900.9V914.6M1235.5 899.9V921.4M1236.5 898.9V916.0M1237.5 901.2V917.0M1238.5 899.7V916.7M1239.5 903.1V918.4M1240.5 902.5V916.9M1241.5 900.9V917.0M1242.5 902.0V916.5M1243.5 900.4V916.0M1244.5 901.7V916.9M1245.5 898.1V914.2M1246.5 902.4V915.3M1247.5 893.6V925.0M1248.5 896.3V921.2M1249.5 893.5V922.7M1250.5 897.4V919.8M1251.5 898.4V918.1M1252.5 896.0V917.9M1253.5 896.1V920.2M1254.5 897.9V923.6M1255.5 896.2V917.6M1256.5 899.2V917.9M1257.5 898.2V917.5M1258.5 895.5V917.7M1259.5 896.2V918.6M1260.5 900.3V917.2M1261.5 898.6V918.3M1262.5 898.8V916.0M1263.5 900.7V918.1M1264.5 900.8V917.2M1265.5 898.7V917.2M1266.5 901.1V919.3M1267.5 900.4V915.8M1268.5 895.3V918.4M1269.5 901.4V915.0M1270.5 900.1V917.3M1271.5 898.6V915.3M1272.5 897.9V918.6M1273.5 902.4V916.5M1274.5 901.7V921.2M1275.5 899.1V917.3M1276.5 902.2V914.4M1277.5 902.6V917.2M1278.5 903.0V915.0M1279.5 902.3V921.2M1280.5 900.4V920.5M1281.5 899.7V918.6M1282.5 898.9V918.8M1283.5 900.7V915.6M1284.5 895.6V921.5M1285.5 899.9V914.4M1286.5 900.7V919.2M1287.5 901.3V915.7M1288.5 902.2V914.0M1289.5 903.1V914.3M1290.5 899.0V917.9M1291.5 903.5V915.2M1292.5 903.7V914.9M1293.5 903.4V917.2M1294.5 903.8V915.1M1295.5 900.2V915.7M1296.5 903.7V915.7M1297.5 897.3V912.7M1298.5 899.8V916.1M1299.5 899.3V914.3M1300.5 897.9V912.7M1301.5 901.7V912.4M1302.5 903.0V915.4M1303.5 898.7V917.2M1304.5 902.4V912.9M1305.5 899.2V912.8M1306.5 903.7V912.9M1307.5 900.6V915.2M1308.5 904.6V914.3M1309.5 904.2V913.6M1310.5 903.7V912.8M1311.5 903.7V913.2M1312.5 894.4V921.0M1313.5 898.0V918.4M1314.5 893.5V917.3M1315.5 897.9V919.1M1316.5 898.1V919.3M1317.5 892.3V914.9M1318.5 900.1V919.0M1319.5 901.3V914.5M1320.5 894.9V917.5M1321.5 899.0V915.7M1322.5 901.7V915.2M1323.5 901.1V914.8M1324.5 902.3V917.8M1325.5 901.6V915.8M1326.5 903.6V914.2M1327.5 901.4V913.5M1328.5 903.0V913.5M1329.5 904.0V917.7M1330.5 902.4V912.9M1331.5 901.7V913.8M1332.5 897.4V913.6M1333.5 903.2V914.1M1334.5 897.3V913.0M1335.5 903.3V913.3M1336.5 903.5V913.7M1337.5 901.5V919.0M1338.5 901.0V917.9M1339.5 902.0V915.2M1340.5 900.6V918.9M1341.5 903.2V914.2M1342.5 903.7V920.1M1343.5 902.3V913.8M1344.5 898.7V915.1M1345.5 899.6V916.4M1346.5 902.3V914.3M1347.5 903.2V914.2M1348.5 903.2V913.7M1349.5 900.0V914.7M1350.5 902.4V914.4M1351.5 897.0V915.3M1352.5 901.5V916.2M1353.5 903.3V916.3M1354.5 901.5V914.6M1355.5 903.7V914.4M1356.5 898.2V915.4M1357.5 903.1V920.3M1358.5 903.3V919.5M1359.5 902.8V913.9M1360.5 902.9V913.7M1361.5 903.4V915.1M1362.5 896.8V919.5M1363.5 898.1V919.6M1364.5 902.5V914.4M1365.5 901.6V913.3M1366.5 897.4V915.5M1367.5 901.9V913.1M1368.5 903.0V913.7M1369.5 899.1V915.9M1370.5 903.6V914.8M1371.5 904.0V917.3M1372.5 901.8V920.2M1373.5 901.1V914.4M1374.5 903.9V912.9M1375.5 901.5V919.9M1376.5 901.2V912.7M1377.5 892.0V921.9M1378.5 897.5V923.4M1379.5 897.3V923.6M1380.5 898.8V923.7M1381.5 897.6V919.7M1382.5 900.2V919.8M1383.5 900.9V922.4M1384.5 897.1V919.1M1385.5 895.7V917.2M1386.5 895.8V915.5M1387.5 900.1V919.2M1388.5 896.2V915.6M1389.5 901.8V914.2M1390.5 902.4V914.7M1391.5 902.2V914.6M1392.5 902.9V914.7M1393.5 901.7V918.9M1394.5 900.5V915.1M1395.5 901.8V914.6M1396.5 898.4V913.4M1397.5 903.8V916.2M1398.5 903.2V917.1M1399.5 903.6V914.9M1400.5 901.9V919.7M1401.5 900.0V915.7M1402.5 903.4V915.1M1403.5 901.7V919.3M1404.5 903.8V912.4M1405.5 899.8V913.2M1406.5 903.9V913.8M1407.5 898.1V913.9M1408.5 902.1V913.8M1409.5 902.0V918.7M1410.5 898.3V913.9M1411.5 901.8V917.9M1412.5 900.4V914.7M1413.5 896.1V918.9M1414.5 901.8V916.7M1415.5 901.2V914.6M1416.5 903.4V914.5M1417.5 903.2V914.4M1418.5 897.6V915.6M1419.5 903.4V914.8M1420.5 902.0V914.6M1421.5 903.0V913.5M1422.5 902.9V919.4M1423.5 902.7V914.1M1424.5 901.3V914.8M1425.5 901.0V917.7M1426.5 903.4V913.5M1427.5 899.1V915.0M1428.5 903.0V913.4M1429.5 900.8V915.4M1430.5 902.4V914.1M1431.5 902.5V914.2M1432.5 902.8V914.5M1433.5 900.5V915.4M1434.5 902.5V918.6M1435.5 903.4V915.4M1436.5 903.0V913.8M1437.5 901.3V914.4M1438.5 897.7V913.9M1439.5 899.9V916.9M1440.5 903.0V917.6M1441.5 892.0V920.3M1442.5 895.2V924.6M1443.5 892.0V920.8M1444.5 896.9V921.8M1445.5 894.8V920.0M1446.5 898.9V921.1M1447.5 898.0V919.6M1448.5 894.0V924.2M1449.5 899.9V919.6M1450.5 899.8V917.8M1451.5 895.4V922.0M1452.5 896.6V920.8M1453.5 899.9V923.1M1454.5 900.2V917.1M1455.5 899.4V917.6M1456.5 901.0V918.4M1457.5 898.6V915.6M1458.5 900.6V915.4M1459.5 901.5V916.1M1460.5 899.5V921.6M1461.5 901.7V916.0M1462.5 899.9V917.6M1463.5 901.4V917.1M1464.5 901.0V918.2M1465.5 899.2V917.6M1466.5 894.5V915.2M1467.5 894.7V920.5M1468.5 895.7V915.3M1469.5 901.3V917.6M1470.5 900.1V918.4M1471.5 897.1V915.8M1472.5 897.8V915.8M1473.5 900.6V920.5M1474.5 900.0V916.2M1475.5 899.4V918.3M1476.5 900.3V916.7M1477.5 900.6V916.9M1478.5 899.3V916.4M1479.5 901.1V918.7M1480.5 895.9V917.5M1481.5 901.5V915.8M1482.5 901.3V915.2M1483.5 896.4V914.6M1484.5 901.6V919.9M1485.5 902.6V914.7M1486.5 901.5V921.6M1487.5 901.5V917.1M1488.5 902.9V918.4M1489.5 902.3V917.0M1490.5 902.4V914.3M1491.5 899.6V916.0M1492.5 902.2V919.9M1493.5 903.3V913.9M1494.5 900.2V918.0M1495.5 902.1V917.3M1496.5 903.7V918.9M1497.5 901.9V916.1M1498.5 903.3V913.8M1499.5 900.7V920.1M1500.5 903.0V915.9M1501.5 901.1V917.0M1502.5 902.9V916.2M1503.5 902.5V920.1M1504.5 903.1V914.1M1505.5 903.0V913.6M1506.5 892.0V925.0M1507.5 892.0V925.0M1508.5 892.3V917.7M1509.5 896.2V919.1M1510.5 897.0V920.1M1511.5 898.3V916.1M1512.5 899.0V917.8M1513.5 899.6V916.9M1514.5 895.6V919.5M1515.5 899.2V921.9M1516.5 899.0V921.4M1517.5 901.6V921.8M1518.5 898.8V914.8M1519.5 901.2V915.7M1520.5 897.8V914.4M1521.5 899.7V915.1M1522.5 902.8V914.3M1523.5 903.0V918.0M1524.5 898.4V916.8M1525.5 903.4V913.4M1526.5 899.0V919.5M1527.5 902.4V914.4M1528.5 901.4V915.8M1529.5 903.6V915.3M1530.5 902.9V913.8M1531.5 899.6V914.8M1532.5 897.4V914.3M1533.5 903.3V919.6M1534.5 902.0V915.9M1535.5 904.0V916.1M1536.5 901.2V914.8M1537.5 897.8V913.9M1538.5 899.0V913.7M1539.5 902.2V915.6M1540.5 901.3V917.4M1541.5 901.5V914.7M1542.5 902.6V914.7M1543.5 902.7V921.2M1544.5 900.5V915.1M1545.5 899.8V915.8M1546.5 901.5V916.9M1547.5 901.6V915.0M1548.5 902.4V913.8M1549.5 896.6V915.3M1550.5 902.5V914.8M1551.5 902.4V913.4M1552.5 902.4V916.0M1553.5 901.9V917.0M1554.5 899.8V915.5M1555.5 899.3V914.8M1556.5 900.9V915.4M1557.5 900.9V915.5M1558.5 903.2V913.9M1559.5 898.0V913.5M1560.5 896.6V913.7M1561.5 903.4V914.6M1562.5 903.3V916.9M1563.5 901.0V913.5M1564.5 899.9V913.3M1565.5 903.9V915.8M1566.5 903.4V913.0M1567.5 901.0V914.5M1568.5 903.6V913.5M1569.5 901.4V914.0M1570.5 904.1V915.1M1571.5 895.1V925.0M1572.5 895.5V921.6M1573.5 895.5V919.5M1574.5 898.3V918.7M1575.5 897.6V918.4M1576.5 898.1V918.1M1577.5 899.3V916.3M1578.5 897.9V916.3M1579.5 893.7V917.2M1580.5 898.8V916.3M1581.5 899.8V915.5M1582.5 900.8V914.8M1583.5 898.5V920.8M1584.5 899.3V919.4M1585.5 902.4V915.2M1586.5 903.2V914.7M1587.5 900.8V919.8M1588.5 901.9V916.3M1589.5 903.0V916.1M1590.5 903.8V918.1M1591.5 903.6V914.0M1592.5 903.4V912.9M1593.5 901.1V913.7M1594.5 902.8V913.5M1595.5 904.7V919.6M1596.5 902.8V913.2M1597.5 900.5V914.6M1598.5 905.0V913.0M1599.5 900.9V913.1M1600.5 900.9V914.5M1601.5 901.0V913.0M1602.5 905.1V912.5" fill="none" stroke="#eba6a6" stroke-width="1" shape-rendering="crispEdges"/></svg>
<div style="left:100px;top:930px;width:66px;height:35px;background:#f2f200;overflow:hidden;border:1px dashed rgba(255,255,215,.55);"></div>
<div style="left:100px;top:930px;width:60.500px;height:35px;overflow:hidden">
<span class="t" style="top:9.5px;font-size:11.5px;line-height:16px;color:#ffffee;font-weight:bold;left:6.5px;transform-origin:0 50%;transform:scaleX(0.860);">まずFコードは一フレットにセーハを</span>
</div>
<div style="left:815px;top:822px;width:1px;height:189px;background:#d22020;"></div>
<div style="left:1603px;top:849px;width:17px;height:162px;background:#f0f0f0;"></div>
<div style="left:1604px;top:866px;width:15px;height:52px;background:#cdcdcd;"></div>
<svg class="a" style="left:1607px;top:854px" width="9" height="6" viewBox="0 0 9 6" fill="none" stroke="#b5b5b5" stroke-width="1.100"><path d="M.8 5l3.700-3.700L8.200 5"/></svg>
<svg class="a" style="left:1607px;top:1000px" width="9" height="6" viewBox="0 0 9 6" fill="none" stroke="#8a8a8a" stroke-width="1.100"><path d="M.8 1l3.700 3.700L8.200 1"/></svg>
<div style="left:20px;top:1011px;width:1600px;height:17px;background:#f0f0f0;"></div>
<div style="left:324px;top:1012px;width:53px;height:15px;background:#cdcdcd;"></div>
<svg class="a" style="left:105px;top:1015px" width="6" height="9" viewBox="0 0 6 9" fill="none" stroke="#9a9a9a" stroke-width="1.100"><path d="M5 .8L1.300 4.500 5 8.200"/></svg>
<svg class="a" style="left:1592px;top:1015px" width="6" height="9" viewBox="0 0 6 9" fill="none" stroke="#7a7a7a" stroke-width="1.100"><path d="M1 .8l3.700 3.700L1 8.200"/></svg>
<div class="cmb" style="left:21px;top:1028px;width:118px;height:26px;"></div>
<div style="left:26px;top:1032px;width:4px;height:18px;background:#f5f500;"></div>
<span class="t" style="top:1033.5px;font-size:12px;line-height:16px;color:#111;left:35px;transform-origin:0 50%;transform:scaleX(0.910);">ゆっくり魔理沙</span>
<svg class="a" style="left:127.25px;top:1037px" width="6.5" height="4.88" viewBox="0 0 8 6" fill="none" stroke="#444" stroke-width="1.500"><path d="M.8 1l3.200 3.200L7.200 1"/></svg>
<div class="btn" style="left:140px;top:1028px;width:26px;height:26px;"></div>
<svg class="i" style="left:147.5px;top:1035.5px" width="12" height="12" viewBox="0 0 24 24" fill="#222" color="#222"><circle cx="10.600" cy="5.600" r="5.300"/><path d="M.5 21l.7-4Q4 13.600 11 13.400h2.500L7.500 21z"/><path d="M12 21.500L22 11.500" stroke="currentColor" stroke-width="3.400" fill="none"/><path d="M20.300 9.800l1.800-1.800 2.400 2.400-1.800 1.800z"/></svg>
<div class="tb" style="left:166px;top:1028px;width:1335px;height:26px;"></div>
<span class="t" style="top:1033.5px;font-size:12px;line-height:16px;color:#8a8a8a;left:172px;transform-origin:0 50%;transform:scaleX(0.838);">ここにセリフを入力</span>
<div style="left:1501px;top:1028px;width:100px;height:26px;background:#f3f3f3;border:1px solid #b5b5b5;"></div>
<span class="t" style="top:1033.5px;font-size:12px;line-height:16px;color:#8a8a8a;left:1401px;width:300px;text-align:center;transform-origin:50% 50%;transform:scaleX(0.955);">追加</span>
<div style="left:1601px;top:1028px;width:18px;height:26px;background:#eee;border:1px solid #b5b5b5;"></div>
<svg class="a" style="left:1607.5px;top:1036.6px" width="6.5" height="4.88" viewBox="0 0 8 6" fill="none" stroke="#222" stroke-width="1.500"><path d="M.8 1l3.200 3.200L7.200 1"/></svg>
<div style="left:0px;top:1054px;width:1920px;height:26px;background:#f0eeee;"></div>
<span class="t" style="top:1059.5px;font-size:12px;line-height:16px;color:#333;left:6px;transform-origin:0 50%;transform:scaleX(0.945);">00:00:31.96</span>
<span class="t" style="top:1059.5px;font-size:12px;line-height:16px;color:#333;left:76px;transform-origin:0 50%;transform:scaleX(0.945);">/</span>
<span class="t" style="top:1059.5px;font-size:12px;line-height:16px;color:#333;left:85px;transform-origin:0 50%;transform:scaleX(0.945);">00:03:15.21</span>
<span class="t" style="top:1059.5px;font-size:12px;line-height:16px;color:#333;left:159px;transform-origin:0 50%;transform:scaleX(0.945);">1918</span>
<span class="t" style="top:1059.5px;font-size:12px;line-height:16px;color:#333;left:196px;transform-origin:0 50%;transform:scaleX(0.945);">/</span>
<span class="t" style="top:1059.5px;font-size:12px;line-height:16px;color:#333;left:205px;transform-origin:0 50%;transform:scaleX(0.945);">11713</span>
<span class="t" style="top:1059.5px;font-size:12px;line-height:16px;color:#333;left:248px;transform-origin:0 50%;transform:scaleX(0.945);">x0.18</span>
<span class="t" style="top:1059.5px;font-size:12px;line-height:16px;color:#333;left:288px;transform-origin:0 50%;transform:scaleX(0.945);">2160x3840 60fps 48000Hz</span>
<span class="t" style="top:1059.5px;font-size:12px;line-height:16px;color:#333;left:441px;transform-origin:0 50%;transform:scaleX(0.970);">無題*</span>
<div style="left:150px;top:1056px;width:1px;height:22px;background:#555;"></div>
<div style="left:242px;top:1056px;width:1px;height:22px;background:#555;"></div>
<div style="left:280px;top:1056px;width:1px;height:22px;background:#555;"></div>
<div style="left:434px;top:1056px;width:1px;height:22px;background:#555;"></div>
<div style="left:1620px;top:41px;width:5px;height:1013px;background:#f0f0f0;"></div>
<div style="left:1625px;top:41px;width:277px;height:1013px;background:#fff;"></div>
<div style="left:1902px;top:41px;width:18px;height:1013px;background:#f0f0f0;"></div>
<div style="left:1903px;top:110px;width:16px;height:563px;background:#cdcdcd;"></div>
<svg class="a" style="left:1907px;top:46px" width="9" height="6" viewBox="0 0 9 6" fill="none" stroke="#b5b5b5" stroke-width="1.100"><path d="M.8 5l3.700-3.700L8.200 5"/></svg>
<svg class="a" style="left:1907px;top:1043px" width="9" height="6" viewBox="0 0 9 6" fill="none" stroke="#7a7a7a" stroke-width="1.100"><path d="M.8 1l3.700 3.700L8.200 1"/></svg>
<div class="btn" style="left:1876px;top:38px;width:26px;height:7px;"></div>
<div style="left:0px;top:23px;width:1920px;height:18px;background:#f0f0f0;"></div>
<span class="t" style="top:50.5px;font-size:12px;line-height:16px;color:#111;left:1516px;width:300px;text-align:center;transform-origin:50% 50%;transform:scaleX(0.828);">アイテムの色</span>
<div style="left:1706px;top:45px;width:196px;height:26px;background:#ffff00;border:1px solid #8a8a3a;"></div>
<span class="t" style="top:76.5px;font-size:12px;line-height:16px;color:#111;left:1516px;width:300px;text-align:center;transform-origin:50% 50%;transform:scaleX(0.955);">備考</span>
<div class="tb" style="left:1706px;top:71px;width:196px;height:26px;"></div>
<span class="t" style="top:76.5px;font-size:12px;line-height:16px;color:#9a9a9a;left:1713px;transform-origin:0 50%;transform:scaleX(0.930);">Shift+Enterで改行</span>
<span class="t" style="top:102.5px;font-size:12px;line-height:16px;color:#111;left:1516px;width:300px;text-align:center;transform-origin:50% 50%;transform:scaleX(0.800);">ロック</span>
<div class="tg" style="left:1706px;top:101px;width:32px;height:18px"><i></i></div>
<span class="t" style="top:102.5px;font-size:12px;line-height:16px;color:#111;left:1654px;width:300px;text-align:center;transform-origin:50% 50%;transform:scaleX(0.955);">波形</span>
<div class="tg" style="left:1844px;top:101px;width:32px;height:18px"><i></i></div>
<span class="t" style="top:128.5px;font-size:12px;line-height:16px;color:#111;left:1516px;width:300px;text-align:center;transform-origin:50% 50%;transform:scaleX(0.955);">非表示</span>
<div class="tg" style="left:1706px;top:127px;width:32px;height:18px"><i></i></div>
<svg class="a" style="left:1627px;top:152px" width="19" height="19" viewBox="0 0 18 18" fill="none" stroke="#222"><circle cx="9" cy="9" r="8.300" stroke-width="1"/><path d="M5.300 10.600l3.700-3.700 3.700 3.700" stroke-width="2"/></svg>
<span class="t" style="top:154.5px;font-size:12px;line-height:16px;color:#111;left:1650px;transform-origin:0 50%;transform:scaleX(0.800);">ボイス</span>
<span class="t" style="top:177.5px;font-size:12px;line-height:16px;color:#111;left:1516px;width:300px;text-align:center;transform-origin:50% 50%;transform:scaleX(0.800);">キャラクター</span>
<div class="cmb" style="left:1706px;top:172px;width:170px;height:26px;"></div>
<div style="left:1711.5px;top:174px;width:4.5px;height:22px;background:#f5f500;"></div>
<span class="t" style="top:177.5px;font-size:12px;line-height:16px;color:#111;left:1720px;transform-origin:0 50%;transform:scaleX(0.910);">ゆっくり魔理沙</span>
<svg class="a" style="left:1863.65px;top:181px" width="6.5" height="4.88" viewBox="0 0 8 6" fill="none" stroke="#444" stroke-width="1.500"><path d="M.8 1l3.200 3.200L7.200 1"/></svg>
<div class="btn" style="left:1876px;top:172px;width:26px;height:26px;"></div>
<svg class="i" style="left:1883.5px;top:179.5px" width="12" height="12" viewBox="0 0 24 24" fill="#222" color="#222"><circle cx="10.600" cy="5.600" r="5.300"/><path d="M.5 21l.7-4Q4 13.600 11 13.400h2.500L7.500 21z"/><path d="M12 21.500L22 11.500" stroke="currentColor" stroke-width="3.400" fill="none"/><path d="M20.300 9.800l1.800-1.800 2.400 2.400-1.800 1.800z"/></svg>
<span class="t" style="top:203.5px;font-size:12px;line-height:16px;color:#111;left:1516px;width:300px;text-align:center;transform-origin:50% 50%;transform:scaleX(0.800);">セリフ</span>
<div style="left:1706px;top:198px;width:170px;height:35px;background:#ecf2fb;"></div>
<div style="left:1712px;top:203.5px;width:2px;height:2px;background:#555;"></div>
<div style="left:1712px;top:207.2px;width:2px;height:2px;background:#555;"></div>
<div style="left:1712px;top:210.9px;width:2px;height:2px;background:#555;"></div>
<div style="left:1712px;top:214.6px;width:2px;height:2px;background:#555;"></div>
<span class="t" style="top:203.5px;font-size:12.5px;line-height:16px;color:#a9b1bd;font-weight:bold;left:1577.5px;width:300px;text-align:center;transform-origin:50% 50%;transform:scaleX(1.000);">B</span>
<span class="t" style="top:203.5px;font-size:12.5px;line-height:16px;color:#a9b1bd;font-weight:bold;left:1600px;width:300px;text-align:center;transform-origin:50% 50%;transform:scaleX(1.000);font-style:italic;font-family:'Liberation Serif',serif;">I</span>
<span class="t" style="top:201.5px;font-size:8.5px;line-height:16px;color:#a9b1bd;font-weight:bold;left:1621px;width:300px;text-align:center;transform-origin:50% 50%;transform:scaleX(1.000);">R</span>
<span class="t" style="top:206.5px;font-size:8.5px;line-height:16px;color:#a9b1bd;left:1625.5px;width:300px;text-align:center;transform-origin:50% 50%;transform:scaleX(1.000);font-style:italic;">A</span>
<span class="t" style="top:204.0px;font-size:12.5px;line-height:16px;color:#a9b1bd;left:1644px;width:300px;text-align:center;transform-origin:50% 50%;transform:scaleX(1.000);">A</span>
<span class="t" style="top:204.0px;font-size:12.5px;line-height:16px;color:#a9b1bd;left:1666.5px;width:300px;text-align:center;transform-origin:50% 50%;transform:scaleX(1.000);">A</span>
<svg class="a" style="left:1798px;top:205px" width="30" height="12" viewBox="0 0 30 12" fill="none" stroke="#a9b1bd" stroke-width="1.100"><path d="M3.500 10V3.500M1.300 5.700l2.200-2.200 2.200 2.200"/><path d="M26.500 3.500V10M24.300 7.800l2.200 2.200 2.200-2.200"/></svg>
<svg class="a" style="left:1835px;top:204px" width="14" height="14" viewBox="0 0 14 14" fill="none" stroke="#a9b1bd" stroke-width="1.300"><path d="M2 2.500h10M3 12l4-6 4 6M3.500 5l7 7M10.500 5l-7 7" /></svg>
<div style="left:1856px;top:203px;width:1px;height:18px;background:#c3c9d2;"></div>
<div style="left:1862px;top:203px;width:14px;height:18px;overflow:hidden"><svg class="a" style="left:0;top:1px" width="16" height="16" viewBox="0 0 24 24" fill="#a9b1bd"><path d="M9.64 7.64c.23-.5.36-1.05.36-1.64 0-2.21-1.79-4-4-4S2 3.79 2 6s1.79 4 4 4c.59 0 1.14-.13 1.64-.36L10 12l-2.36 2.36C7.14 14.13 6.59 14 6 14c-2.21 0-4 1.79-4 4s1.79 4 4 4 4-1.79 4-4c0-.59-.13-1.14-.36-1.64L12 14l7 7h3v-1L9.64 7.64zM6 8c-1.1 0-2-.89-2-2s.9-2 2-2 2 .89 2 2-.9 2-2 2zm0 12c-1.1 0-2-.89-2-2s.9-2 2-2 2 .89 2 2-.9 2-2 2zm6-7.5c-.28 0-.5-.22-.5-.5s.22-.5.5-.5.5.22.5.5-.22.5-.5.5zM19 3l-6 6 2 2 7-7V3z"/></svg></div>
<div style="left:1723px;top:226px;width:89px;height:7px;background:#cdcdcd;"></div>
<div class="tb" style="left:1706px;top:232px;width:170px;height:58px;"></div>
<span class="t" style="top:237.5px;font-size:12px;line-height:16px;color:#111;left:1712.5px;transform-origin:0 50%;transform:scaleX(0.816);">まずFコードは一フレットにセーハを</span>
<span class="t" style="top:253.5px;font-size:12px;line-height:16px;color:#111;left:1712.5px;transform-origin:0 50%;transform:scaleX(0.800);">するので</span>
<span class="t" style="top:269.5px;font-size:12px;line-height:16px;color:#111;left:1712.5px;transform-origin:0 50%;transform:scaleX(0.891);">全体を半音上げます</span>
<div class="btn" style="left:1876px;top:198px;width:26px;height:92px;"></div>
<span class="t" style="top:237.5px;font-size:12px;line-height:16px;color:#111;left:1739px;width:300px;text-align:center;transform-origin:50% 50%;transform:scaleX(0.955);">変</span>
<span class="t" style="top:295.5px;font-size:12px;line-height:16px;color:#111;left:1516px;width:300px;text-align:center;transform-origin:50% 50%;transform:scaleX(0.955);">発音</span>
<div class="tb" style="left:1706px;top:290px;width:144px;height:74px;"></div>
<span class="t" style="top:295.5px;font-size:12px;line-height:16px;color:#111;left:1712.5px;transform-origin:0 50%;transform:scaleX(0.855);">まず/えふ/こーどわ/い_チふ</span>
<span class="t" style="top:311.5px;font-size:12px;line-height:16px;color:#111;left:1712.5px;transform-origin:0 50%;transform:scaleX(0.855);">れっとに/せーはを/するので/</span>
<span class="t" style="top:327.5px;font-size:12px;line-height:16px;color:#111;left:1712.5px;transform-origin:0 50%;transform:scaleX(0.855);">ぜんたいを/はんおん/あげま_</span>
<span class="t" style="top:343.5px;font-size:12px;line-height:16px;color:#111;left:1712.5px;transform-origin:0 50%;transform:scaleX(0.855);">ス</span>
<div class="btn" style="left:1850px;top:290px;width:26px;height:74px;"></div>
<svg class="a" style="left:1858px;top:322px" width="10" height="11" viewBox="0 0 10 11" fill="#222"><path d="M1.500 .8v9.400L9.300 5.500z"/></svg>
<div class="btn" style="left:1876px;top:290px;width:26px;height:74px;"></div>
<svg class="i" style="left:1881.5px;top:319.5px" width="15" height="15" viewBox="0 0 24 24" fill="#222" ><path d="M17.650 6.350A7.958 7.958 0 0 0 12 4c-4.420 0-7.990 3.580-7.990 8s3.570 8 7.990 8c3.730 0 6.840-2.550 7.730-6h-2.080A5.990 5.990 0 0 1 12 18c-3.310 0-6-2.690-6-6s2.690-6 6-6c1.660 0 3.140.69 4.220 1.780L13 11h7V4l-2.350 2.350z"/></svg>
<div class="btn" style="left:1706px;top:364px;width:196px;height:26px;"></div>
<span class="t" style="top:369.5px;font-size:12px;line-height:16px;color:#111;left:1654px;width:300px;text-align:center;transform-origin:50% 50%;transform:scaleX(0.927);">抑揚を編集</span>
<span class="t" style="top:395.5px;font-size:12px;line-height:16px;color:#111;left:1516px;width:300px;text-align:center;transform-origin:50% 50%;transform:scaleX(0.955);">音量</span>
<span class="t" style="top:395.8px;font-size:11.6px;line-height:16px;color:#222;left:1458px;width:300px;text-align:right;transform-origin:100% 50%;transform:scaleX(0.970);">50.0</span>
<span class="t" style="top:395.8px;font-size:11.6px;line-height:16px;color:#222;left:1764px;transform-origin:0 50%;transform:scaleX(0.950);">%</span>
<div class="trk" style="left:1786px;top:401px;width:85px;height:4px;"></div>
<div class="thm" style="left:1823px;top:394.5px;width:11px;height:17px;"></div>
<div class="btn" style="left:1876px;top:390px;width:26px;height:26px;"></div>
<span class="t" style="top:395.0px;font-size:12px;line-height:16px;color:#111;left:1739px;width:300px;text-align:center;transform-origin:50% 50%;transform:scaleX(1.000);">-</span>
<span class="t" style="top:421.5px;font-size:12px;line-height:16px;color:#111;left:1516px;width:300px;text-align:center;transform-origin:50% 50%;transform:scaleX(0.800);">パン</span>
<span class="t" style="top:421.8px;font-size:11.6px;line-height:16px;color:#222;left:1458px;width:300px;text-align:right;transform-origin:100% 50%;transform:scaleX(0.970);">0.0</span>
<div class="trk" style="left:1786px;top:427px;width:85px;height:4px;"></div>
<div class="thm" style="left:1823px;top:420.5px;width:11px;height:17px;"></div>
<div class="btn" style="left:1876px;top:416px;width:26px;height:26px;"></div>
<span class="t" style="top:421.0px;font-size:12px;line-height:16px;color:#111;left:1739px;width:300px;text-align:center;transform-origin:50% 50%;transform:scaleX(1.000);">-</span>
<span class="t" style="top:444.5px;font-size:9.5px;line-height:16px;color:#111;left:1516px;width:300px;text-align:center;transform-origin:50% 50%;transform:scaleX(1.030);">音程 / 再生速度</span>
<span class="t" style="top:447.8px;font-size:11.6px;line-height:16px;color:#222;left:1458px;width:300px;text-align:right;transform-origin:100% 50%;transform:scaleX(0.970);">100.0</span>
<span class="t" style="top:447.8px;font-size:11.6px;line-height:16px;color:#222;left:1764px;transform-origin:0 50%;transform:scaleX(0.950);">%</span>
<div class="trk" style="left:1786px;top:453px;width:87px;height:4px;"></div>
<div class="thm" style="left:1824px;top:446.5px;width:11px;height:17px;"></div>
<span class="t" style="top:473.5px;font-size:12px;line-height:16px;color:#111;left:1516px;width:300px;text-align:center;transform-origin:50% 50%;transform:scaleX(0.907);">読み上げ速度</span>
<span class="t" style="top:473.8px;font-size:11.6px;line-height:16px;color:#222;left:1458px;width:300px;text-align:right;transform-origin:100% 50%;transform:scaleX(0.970);">150</span>
<span class="t" style="top:473.8px;font-size:11.6px;line-height:16px;color:#222;left:1764px;transform-origin:0 50%;transform:scaleX(0.950);">%</span>
<div class="trk" style="left:1786px;top:479px;width:87px;height:4px;"></div>
<div class="thm" style="left:1838px;top:472.5px;width:11px;height:17px;"></div>
<span class="t" style="top:499.5px;font-size:12px;line-height:16px;color:#111;left:1516px;width:300px;text-align:center;transform-origin:50% 50%;transform:scaleX(0.800);">バージョン</span>
<div class="cmb" style="left:1706px;top:494px;width:196px;height:26px;"></div>
<span class="t" style="top:499.5px;font-size:12px;line-height:16px;color:#111;left:1712px;transform-origin:0 50%;transform:scaleX(0.950);">v1.7</span>
<svg class="a" style="left:1889.25px;top:502.8px" width="6.5" height="4.88" viewBox="0 0 8 6" fill="none" stroke="#444" stroke-width="1.500"><path d="M.8 1l3.200 3.200L7.200 1"/></svg>
<span class="t" style="top:525.5px;font-size:12px;line-height:16px;color:#111;left:1516px;width:300px;text-align:center;transform-origin:50% 50%;transform:scaleX(0.955);">再生開始位置</span>
<div class="tb" style="left:1706px;top:520px;width:170px;height:26px;"></div>
<span class="t" style="top:525.5px;font-size:12px;line-height:16px;color:#111;left:1713px;transform-origin:0 50%;transform:scaleX(0.945);">00:00:00.00</span>
<div class="btn" style="left:1876px;top:520px;width:26px;height:26px;"></div>
<span class="t" style="top:525.5px;font-size:12px;line-height:16px;color:#111;left:1739px;width:300px;text-align:center;transform-origin:50% 50%;transform:scaleX(0.955);">時</span>
<span class="t" style="top:551.5px;font-size:12px;line-height:16px;color:#111;left:1516px;width:300px;text-align:center;transform-origin:50% 50%;transform:scaleX(0.800);">フェードイン</span>
<span class="t" style="top:551.8px;font-size:11.6px;line-height:16px;color:#222;left:1458px;width:300px;text-align:right;transform-origin:100% 50%;transform:scaleX(0.970);">0.00</span>
<span class="t" style="top:551.8px;font-size:11.6px;line-height:16px;color:#222;left:1762.5px;transform-origin:0 50%;transform:scaleX(0.950);">秒</span>
<div class="trk" style="left:1784px;top:557px;width:89px;height:4px;"></div>
<div class="thm" style="left:1781px;top:550.5px;width:11px;height:17px;"></div>
<span class="t" style="top:577.5px;font-size:12px;line-height:16px;color:#111;left:1516px;width:300px;text-align:center;transform-origin:50% 50%;transform:scaleX(0.800);">フェードアウト</span>
<span class="t" style="top:577.8px;font-size:11.6px;line-height:16px;color:#222;left:1458px;width:300px;text-align:right;transform-origin:100% 50%;transform:scaleX(0.970);">0.00</span>
<span class="t" style="top:577.8px;font-size:11.6px;line-height:16px;color:#222;left:1762.5px;transform-origin:0 50%;transform:scaleX(0.950);">秒</span>
<div class="trk" style="left:1784px;top:583px;width:89px;height:4px;"></div>
<div class="thm" style="left:1781px;top:576.5px;width:11px;height:17px;"></div>
<svg class="a" style="left:1627px;top:601px" width="19" height="19" viewBox="0 0 18 18" fill="none" stroke="#222"><circle cx="9" cy="9" r="8.300" stroke-width="1"/><path d="M5.300 10.600l3.700-3.700 3.700 3.700" stroke-width="2"/></svg>
<span class="t" style="top:603.5px;font-size:12px;line-height:16px;color:#111;left:1650px;transform-origin:0 50%;transform:scaleX(0.800);">エコー</span>
<span class="t" style="top:626.5px;font-size:12px;line-height:16px;color:#111;left:1516px;width:300px;text-align:center;transform-origin:50% 50%;transform:scaleX(0.955);">有効</span>
<div class="tg" style="left:1706px;top:625px;width:32px;height:18px"><i></i></div>
<span class="t" style="top:652.5px;font-size:12px;line-height:16px;color:#111;left:1516px;width:300px;text-align:center;transform-origin:50% 50%;transform:scaleX(0.955);">間隔</span>
<span class="t" style="top:652.8px;font-size:11.6px;line-height:16px;color:#222;left:1458px;width:300px;text-align:right;transform-origin:100% 50%;transform:scaleX(0.970);">0.10</span>
<span class="t" style="top:652.8px;font-size:11.6px;line-height:16px;color:#222;left:1762.5px;transform-origin:0 50%;transform:scaleX(0.950);">秒</span>
<div class="trk" style="left:1786px;top:658px;width:87px;height:4px;"></div>
<div class="thm" style="left:1798px;top:651.5px;width:11px;height:17px;"></div>
<span class="t" style="top:678.5px;font-size:12px;line-height:16px;color:#111;left:1516px;width:300px;text-align:center;transform-origin:50% 50%;transform:scaleX(0.955);">減衰</span>
<span class="t" style="top:678.8px;font-size:11.6px;line-height:16px;color:#222;left:1458px;width:300px;text-align:right;transform-origin:100% 50%;transform:scaleX(0.970);">40.00</span>
<span class="t" style="top:678.8px;font-size:11.6px;line-height:16px;color:#222;left:1764px;transform-origin:0 50%;transform:scaleX(0.950);">%</span>
<div class="trk" style="left:1786px;top:684px;width:87px;height:4px;"></div>
<div class="thm" style="left:1819px;top:677.5px;width:11px;height:17px;"></div>
<svg class="a" style="left:1627px;top:702px" width="19" height="19" viewBox="0 0 18 18" fill="none" stroke="#222"><circle cx="9" cy="9" r="8.300" stroke-width="1"/><path d="M5.300 7.400l3.700 3.700 3.700-3.700" stroke-width="2"/></svg>
<span class="t" style="top:704.5px;font-size:12px;line-height:16px;color:#111;left:1650px;transform-origin:0 50%;transform:scaleX(0.848);">音声エフェクト</span>
<svg class="a" style="left:1627px;top:725px" width="19" height="19" viewBox="0 0 18 18" fill="none" stroke="#222"><circle cx="9" cy="9" r="8.300" stroke-width="1"/><path d="M5.300 10.600l3.700-3.700 3.700 3.700" stroke-width="2"/></svg>
<span class="t" style="top:727.5px;font-size:12px;line-height:16px;color:#111;left:1650px;transform-origin:0 50%;transform:scaleX(0.955);">字幕</span>
<span class="t" style="top:750.5px;font-size:12px;line-height:16px;color:#111;left:1516px;width:300px;text-align:center;transform-origin:50% 50%;transform:scaleX(0.927);">字幕の設定</span>
<div class="cmb" style="left:1706px;top:745px;width:196px;height:26px;"></div>
<span class="t" style="top:750.5px;font-size:12px;line-height:16px;color:#111;left:1712px;transform-origin:0 50%;transform:scaleX(0.893);">個別に設定する</span>
<svg class="a" style="left:1889.25px;top:753.8px" width="6.5" height="4.88" viewBox="0 0 8 6" fill="none" stroke="#444" stroke-width="1.500"><path d="M.8 1l3.200 3.200L7.200 1"/></svg>
<span class="t" style="top:776.5px;font-size:12px;line-height:16px;color:#111;left:1516px;width:300px;text-align:center;transform-origin:50% 50%;transform:scaleX(0.940);">X</span>
<span class="t" style="top:776.8px;font-size:11.6px;line-height:16px;color:#222;left:1458px;width:300px;text-align:right;transform-origin:100% 50%;transform:scaleX(0.970);">-4.0</span>
<span class="t" style="top:776.8px;font-size:11.6px;line-height:16px;color:#222;left:1762.5px;transform-origin:0 50%;transform:scaleX(0.950);">px</span>
<div class="trk" style="left:1786px;top:782px;width:85px;height:4px;"></div>
<div class="thm" style="left:1823px;top:775.5px;width:11px;height:17px;"></div>
<div class="btn" style="left:1876px;top:771px;width:26px;height:26px;"></div>
<span class="t" style="top:776.0px;font-size:12px;line-height:16px;color:#111;left:1739px;width:300px;text-align:center;transform-origin:50% 50%;transform:scaleX(1.000);">-</span>
<span class="t" style="top:802.5px;font-size:12px;line-height:16px;color:#111;left:1516px;width:300px;text-align:center;transform-origin:50% 50%;transform:scaleX(0.940);">Y</span>
<span class="t" style="top:802.8px;font-size:11.6px;line-height:16px;color:#222;left:1458px;width:300px;text-align:right;transform-origin:100% 50%;transform:scaleX(0.970);">1764.0</span>
<span class="t" style="top:802.8px;font-size:11.6px;line-height:16px;color:#222;left:1762.5px;transform-origin:0 50%;transform:scaleX(0.950);">px</span>
<div class="trk" style="left:1786px;top:808px;width:85px;height:4px;"></div>
<div class="thm" style="left:1860px;top:801.5px;width:11px;height:17px;"></div>
<div class="btn" style="left:1876px;top:797px;width:26px;height:26px;"></div>
<span class="t" style="top:802.0px;font-size:12px;line-height:16px;color:#111;left:1739px;width:300px;text-align:center;transform-origin:50% 50%;transform:scaleX(1.000);">-</span>
<span class="t" style="top:805.5px;font-size:12px;line-height:16px;color:#222;left:1864px;transform-origin:0 50%;transform:scaleX(0.950);">x4</span>
<span class="t" style="top:828.5px;font-size:12px;line-height:16px;color:#111;left:1516px;width:300px;text-align:center;transform-origin:50% 50%;transform:scaleX(0.940);">Z</span>
<span class="t" style="top:828.8px;font-size:11.6px;line-height:16px;color:#222;left:1458px;width:300px;text-align:right;transform-origin:100% 50%;transform:scaleX(0.970);">0.0</span>
<span class="t" style="top:828.8px;font-size:11.6px;line-height:16px;color:#222;left:1762.5px;transform-origin:0 50%;transform:scaleX(0.950);">px</span>
<div class="trk" style="left:1786px;top:834px;width:85px;height:4px;"></div>
<div class="thm" style="left:1823px;top:827.5px;width:11px;height:17px;"></div>
<div class="btn" style="left:1876px;top:823px;width:26px;height:26px;"></div>
<span class="t" style="top:828.0px;font-size:12px;line-height:16px;color:#111;left:1739px;width:300px;text-align:center;transform-origin:50% 50%;transform:scaleX(1.000);">-</span>
<span class="t" style="top:854.5px;font-size:12px;line-height:16px;color:#111;left:1516px;width:300px;text-align:center;transform-origin:50% 50%;transform:scaleX(0.955);">不透明度</span>
<span class="t" style="top:854.8px;font-size:11.6px;line-height:16px;color:#222;left:1458px;width:300px;text-align:right;transform-origin:100% 50%;transform:scaleX(0.970);">100.0</span>
<span class="t" style="top:854.8px;font-size:11.6px;line-height:16px;color:#222;left:1764px;transform-origin:0 50%;transform:scaleX(0.950);">%</span>
<div class="trk" style="left:1786px;top:860px;width:90px;height:4px;"></div>
<div class="thm" style="left:1865px;top:853.5px;width:11px;height:17px;"></div>
<div class="btn" style="left:1876px;top:849px;width:26px;height:26px;"></div>
<span class="t" style="top:854.0px;font-size:12px;line-height:16px;color:#111;left:1739px;width:300px;text-align:center;transform-origin:50% 50%;transform:scaleX(1.000);">-</span>
<span class="t" style="top:880.5px;font-size:12px;line-height:16px;color:#111;left:1516px;width:300px;text-align:center;transform-origin:50% 50%;transform:scaleX(0.955);">拡大率</span>
<span class="t" style="top:880.8px;font-size:11.6px;line-height:16px;color:#222;left:1458px;width:300px;text-align:right;transform-origin:100% 50%;transform:scaleX(0.970);">100.0</span>
<span class="t" style="top:880.8px;font-size:11.6px;line-height:16px;color:#222;left:1764px;transform-origin:0 50%;transform:scaleX(0.950);">%</span>
<div class="trk" style="left:1786px;top:886px;width:85px;height:4px;"></div>
<div class="thm" style="left:1802px;top:879.5px;width:11px;height:17px;"></div>
<div class="btn" style="left:1876px;top:875px;width:26px;height:26px;"></div>
<span class="t" style="top:880.0px;font-size:12px;line-height:16px;color:#111;left:1739px;width:300px;text-align:center;transform-origin:50% 50%;transform:scaleX(1.000);">-</span>
<span class="t" style="top:906.5px;font-size:12px;line-height:16px;color:#111;left:1516px;width:300px;text-align:center;transform-origin:50% 50%;transform:scaleX(0.955);">回転角</span>
<span class="t" style="top:906.8px;font-size:11.6px;line-height:16px;color:#222;left:1458px;width:300px;text-align:right;transform-origin:100% 50%;transform:scaleX(0.970);">0.0</span>
<span class="t" style="top:906.8px;font-size:11.6px;line-height:16px;color:#222;left:1762.5px;transform-origin:0 50%;transform:scaleX(0.950);">°</span>
<div class="trk" style="left:1786px;top:912px;width:85px;height:4px;"></div>
<div class="thm" style="left:1823px;top:905.5px;width:11px;height:17px;"></div>
<div class="btn" style="left:1876px;top:901px;width:26px;height:26px;"></div>
<span class="t" style="top:906.0px;font-size:12px;line-height:16px;color:#111;left:1739px;width:300px;text-align:center;transform-origin:50% 50%;transform:scaleX(1.000);">-</span>
<span class="t" style="top:932.5px;font-size:12px;line-height:16px;color:#111;left:1516px;width:300px;text-align:center;transform-origin:50% 50%;transform:scaleX(0.800);">フェードイン</span>
<span class="t" style="top:932.8px;font-size:11.6px;line-height:16px;color:#222;left:1458px;width:300px;text-align:right;transform-origin:100% 50%;transform:scaleX(0.970);">0.00</span>
<span class="t" style="top:932.8px;font-size:11.6px;line-height:16px;color:#222;left:1762.5px;transform-origin:0 50%;transform:scaleX(0.950);">秒</span>
<div class="trk" style="left:1784px;top:938px;width:89px;height:4px;"></div>
<div class="thm" style="left:1781px;top:931.5px;width:11px;height:17px;"></div>
<span class="t" style="top:958.5px;font-size:12px;line-height:16px;color:#111;left:1516px;width:300px;text-align:center;transform-origin:50% 50%;transform:scaleX(0.800);">フェードアウト</span>
<span class="t" style="top:958.8px;font-size:11.6px;line-height:16px;color:#222;left:1458px;width:300px;text-align:right;transform-origin:100% 50%;transform:scaleX(0.970);">0.00</span>
<span class="t" style="top:958.8px;font-size:11.6px;line-height:16px;color:#222;left:1762.5px;transform-origin:0 50%;transform:scaleX(0.950);">秒</span>
<div class="trk" style="left:1784px;top:964px;width:89px;height:4px;"></div>
<div class="thm" style="left:1781px;top:957.5px;width:11px;height:17px;"></div>
<span class="t" style="top:984.5px;font-size:12px;line-height:16px;color:#111;left:1516px;width:300px;text-align:center;transform-origin:50% 50%;transform:scaleX(0.866);">合成モード</span>
<div class="cmb" style="left:1706px;top:979px;width:196px;height:26px;"></div>
<span class="t" style="top:984.5px;font-size:12px;line-height:16px;color:#111;left:1712px;transform-origin:0 50%;transform:scaleX(0.955);">通常</span>
<svg class="a" style="left:1889.25px;top:987.8px" width="6.5" height="4.88" viewBox="0 0 8 6" fill="none" stroke="#444" stroke-width="1.500"><path d="M.8 1l3.200 3.200L7.200 1"/></svg>
<span class="t" style="top:1010.5px;font-size:12px;line-height:16px;color:#111;left:1516px;width:300px;text-align:center;transform-origin:50% 50%;transform:scaleX(0.955);">左右反転</span>
<div class="tg" style="left:1706px;top:1009px;width:32px;height:18px"><i></i></div>
<span class="t" style="top:1010.5px;font-size:12px;line-height:16px;color:#111;left:1654px;width:300px;text-align:center;transform-origin:50% 50%;transform:scaleX(0.800);">クリッピング</span>
<div class="tg" style="left:1844px;top:1009px;width:32px;height:18px"><i></i></div>
<span class="t" style="top:1036.5px;font-size:12px;line-height:16px;color:#111;left:1516px;width:300px;text-align:center;transform-origin:50% 50%;transform:scaleX(0.927);">手前に表示</span>
<div class="tg" style="left:1706px;top:1035px;width:32px;height:18px"><i></i></div>
<span class="t" style="top:1036.5px;font-size:12px;line-height:16px;color:#111;left:1654px;width:300px;text-align:center;transform-origin:50% 50%;transform:scaleX(0.928);">Z値順に表示</span>
<div class="tg" style="left:1844px;top:1035px;width:32px;height:18px"><i></i></div>
<span class="t" style="top:24.5px;font-size:12px;line-height:16px;color:#333;left:7px;transform-origin:0 50%;transform:scaleX(0.844);">ファイル(F)</span>
<span class="t" style="top:24.5px;font-size:12px;line-height:16px;color:#333;left:68px;transform-origin:0 50%;transform:scaleX(0.948);">編集(E)</span>
<span class="t" style="top:24.5px;font-size:12px;line-height:16px;color:#333;left:120px;transform-origin:0 50%;transform:scaleX(0.948);">表示(V)</span>
<span class="t" style="top:24.5px;font-size:12px;line-height:16px;color:#333;left:172px;transform-origin:0 50%;transform:scaleX(0.853);">ツール(T)</span>
<span class="t" style="top:24.5px;font-size:12px;line-height:16px;color:#333;left:226px;transform-origin:0 50%;transform:scaleX(0.853);">ヘルプ(H)</span>
</div></body></html>
